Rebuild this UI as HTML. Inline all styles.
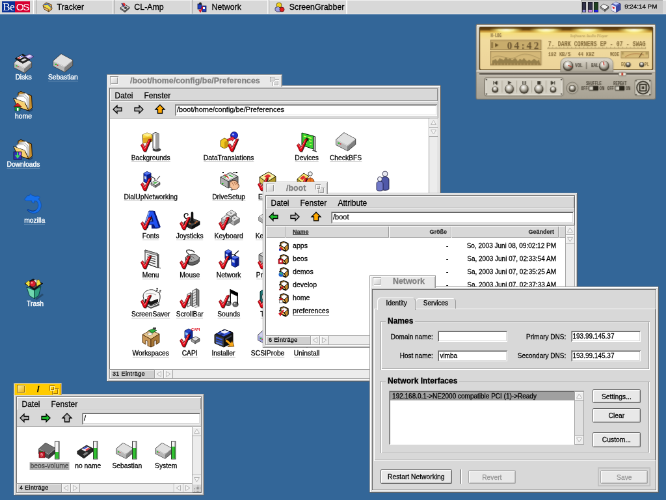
<!DOCTYPE html><html><head><meta charset="utf-8"><title>BeOS</title><style>
html,body{margin:0;padding:0;background:#336698;overflow:hidden;width:666px;height:500px}
#r{position:absolute;left:0;top:0;width:1024px;height:768px;transform-origin:0 0;transform:scale(0.650390625,0.651041667);will-change:transform;-webkit-text-stroke:.28px;font-family:"Liberation Sans",sans-serif;font-size:10px;color:#000;overflow:hidden}
#r *{box-sizing:border-box}
.a{position:absolute}
.win{position:absolute;background:#d8d8d8;box-shadow:inset -1px -1px 0 #606060,inset 1px 1px 0 #a0a0a0,inset 2px 2px 0 0 #fff,inset -2px -2px 0 0 #c0c0c0,inset 0 0 0 3px #e8e8e8,inset 4px 4px 0 #c8c8c8,inset -4px -4px 0 #fff,inset 0 0 0 5px #6c6c6c}
.win.act{box-shadow:inset -1px -1px 0 #606060,inset 1px 1px 0 #a0a0a0,inset 2px 2px 0 0 #fff,inset -2px -2px 0 0 #b8b8b8,inset 0 0 0 3px #d8d8d8,inset 4px 4px 0 #b8b8b8,inset -4px -4px 0 #fff,inset 0 0 0 5px #6c6c6c}
.tab{position:absolute;height:21px;background:#e8e8e8;box-shadow:inset 1px 1px 0 #989898,inset -1px 0 0 #989898,inset 2px 2px 0 #fff,inset -2px 0 0 #b0b0b0;font-weight:bold;font-size:12.400px;color:#808080;line-height:21px;white-space:nowrap}
.tab.act{background:#ffcb00;color:#000;box-shadow:inset 1px 1px 0 #989898,inset -1px 0 0 #989898,inset 2px 2px 0 #ffe98a,inset -2px 0 0 #d8a000}
.cb{position:absolute;left:4.500px;top:3.500px;width:13px;height:13px;background:linear-gradient(135deg,#fff,#c8c8c8);box-shadow:inset 1px 1px 0 #989898,inset -1px -1px 0 #fff,inset 2px 2px 0 #fff,inset -2px -2px 0 #989898}
.act .cb{background:linear-gradient(135deg,#fff6b0,#e8a800);box-shadow:inset 1px 1px 0 #a07000,inset -1px -1px 0 #fff2a0,inset 2px 2px 0 #fff2a0,inset -2px -2px 0 #a07000}
.zb{position:absolute;right:5px;top:4px;width:14px;height:14px}
.zb i{position:absolute;display:block;background:#d8d8d8;box-shadow:inset 1px 1px 0 #989898,inset -1px -1px 0 #fff,inset 2px 2px 0 #fff,inset -2px -2px 0 #989898}
.zb i:first-child{left:4px;top:4px;width:10px;height:10px}
.zb i:last-child{left:0;top:0;width:8px;height:8px}
.act .zb i{background:#ffcb00;box-shadow:inset 1px 1px 0 #a07000,inset -1px -1px 0 #fff2a0,inset 2px 2px 0 #fff2a0,inset -2px -2px 0 #a07000}
.mb{position:absolute;background:#d8d8d8;font-size:12px;line-height:21.500px;box-shadow:inset 1px 1px 0 #fff,inset -1px -1px 0 #989898;white-space:nowrap}
.mb span{position:absolute;top:1.200px}
.nb{position:absolute;background:#d8d8d8;box-shadow:inset 0 1px 0 #fff,inset 0 -1px 0 #989898}
.pt{position:absolute;background:#fff;box-shadow:inset 1px 1px 0 #989898,inset -1px -1px 0 #fff,inset 2px 2px 0 #606060,inset -2px -2px 0 #d8d8d8;font-size:11px;line-height:17px;padding-left:3px;white-space:nowrap;overflow:hidden}
.wh{position:absolute;background:#fff}
.lb{position:absolute;font-size:10.300px;line-height:12px;white-space:nowrap;transform:translateX(-50%);text-align:center}
.lb.u{border-bottom:1px solid #bcbcbc;line-height:11px}
.lb.w.u{border-bottom:1px solid rgba(255,255,255,.28)}
.lb.w{color:#fff;-webkit-text-stroke:.4px}
.sb{position:absolute;background:#ececec;box-shadow:inset 0 0 0 1px #a4a4a4}
.sa{position:absolute;background:#eee;box-shadow:inset 0 0 0 1px #a4a4a4,inset 2px 2px 0 #fff}
.st{position:absolute;background:#d0d0d0;font-size:9px;line-height:15.500px;letter-spacing:.35px;white-space:nowrap;box-shadow:inset 0 0 0 1px #989898,inset 2px 2px 0 #fff;padding-left:5px;overflow:hidden}
svg{position:absolute;overflow:visible}
.lg{font:17px/17px "Liberation Serif",serif;letter-spacing:-.8px;-webkit-text-stroke:0}
.lg2{font:15.500px/18.500px "Liberation Sans",sans-serif;letter-spacing:-1.600px;-webkit-text-stroke:0}
</style></head><body><div id="r">
<div class="a" style="left:0px;top:0px;width:1024px;height:21.5px;background:#d8d8d8;box-shadow:inset 0 -1px 0 #f4f4f4,inset 0 1px 0 #f0f0f0"></div>
<div class="a lg" style="left:3px;top:1.7px;width:20px;height:17.8px;background:#0c3296;color:#fff;text-align:center">Be</div>
<div class="a lg2" style="left:23px;top:1.7px;width:22.7px;height:17.8px;background:#d80032;color:#fff;text-align:center">OS</div>
<div class="a" style="left:50.5px;top:0px;width:1.5px;height:21px;background:#fff"></div>
<div class="a" style="left:54.5px;top:0px;width:1px;height:21px;background:#a0a0a0"></div>
<div class="a" style="left:87.6px;top:1px;font-size:12.4px;line-height:21px;white-space:nowrap">Tracker</div>
<div class="a" style="left:172.8px;top:0px;width:1.5px;height:21px;background:#f8f8f8"></div>
<div class="a" style="left:174.8px;top:0px;width:1px;height:21px;background:#a0a0a0"></div>
<div class="a" style="left:206.3px;top:1px;font-size:12.4px;line-height:21px;white-space:nowrap">CL-Amp</div>
<div class="a" style="left:292.9px;top:0px;width:1.5px;height:21px;background:#f8f8f8"></div>
<div class="a" style="left:294.9px;top:0px;width:1px;height:21px;background:#a0a0a0"></div>
<div class="a" style="left:325.5px;top:1px;font-size:12.4px;line-height:21px;white-space:nowrap">Network</div>
<div class="a" style="left:411.0px;top:0px;width:1.5px;height:21px;background:#f8f8f8"></div>
<div class="a" style="left:413.0px;top:0px;width:1px;height:21px;background:#a0a0a0"></div>
<div class="a" style="left:444.7px;top:1px;font-size:12.4px;line-height:21px;white-space:nowrap">ScreenGrabber</div>
<div class="a" style="left:532.0px;top:0px;width:1.5px;height:21px;background:#f8f8f8"></div>
<div class="a" style="left:892.8px;top:0px;width:126.1px;height:20.5px;background:#c8c8c8;box-shadow:inset 1px 0 0 #989898,inset 0 1px 0 #b0b0b0"></div>
<div class="a" style="left:894.8px;top:3px;width:6.5px;height:15.5px;background:linear-gradient(#303048 78%,#8888d8 78%);box-shadow:inset 0 0 0 .7px #181820"></div>
<div class="a" style="left:904.4px;top:3px;width:6.5px;height:15.5px;background:linear-gradient(#303048 78%,#c888e0 78%);box-shadow:inset 0 0 0 .7px #181820"></div>
<div class="a" style="left:913.3px;top:3px;width:6.5px;height:15.5px;background:linear-gradient(#204020 78%,#2020e8 78%);box-shadow:inset 0 0 0 .7px #181820"></div>
<div class="a" style="left:960.2px;top:0;font-size:9.8px;line-height:20.5px;white-space:nowrap">9:24:14 PM</div>
<svg style="left:20.0px;top:80.7px" width="32" height="32" viewBox="0 0 32 32"><g transform="translate(1,6) scale(0.9)"><polygon points="1,18.500 18.500,27.500 30.500,17.500 30.500,9.500 13,0 1,10.500" fill="#303030" stroke="#303030" stroke-width="1.400" stroke-linejoin="round"/><polygon points="13,0 30.500,9.500 18.500,19.500 1,10.500" fill="#e0e0e0"/><polygon points="1,10.500 18.500,19.500 18.500,27.500 1,18.500" fill="#b8b8b8"/><polygon points="18.500,19.500 30.500,9.500 30.500,17.500 18.500,27.500" fill="#808080"/><path d="M1.500 11 L18.500 20 L30 10" stroke="#f8f8f8" stroke-width=".7" fill="none"/><rect x="3.500" y="14.800" width="2.600" height="2" fill="#20c020"/><rect x="6.500" y="16.300" width="2" height="1.600" fill="#d03030"/></g><polygon points="3,9 15,2 22,6 10,13.500" fill="#181818" stroke="#000" stroke-width=".6"/><polygon points="6,8 13,4 17,6 10,10" fill="#fff"/><polygon points="7,8.500 10,6.800 12,7.800 9,9.500" fill="#e03030"/><polygon points="11,6.200 13.500,4.800 15.500,5.800 13,7.200" fill="#3040d0"/><polygon points="15,7 25,2 32,6 22,12" fill="#a088d8" stroke="#302050" stroke-width=".6"/><polygon points="20,6 26,3 29,5 23,8" fill="#e8e0ff"/><polygon points="8,12 19,6.500 26,10.500 15,16.500" fill="#282828" stroke="#000" stroke-width=".6"/><polygon points="12,11.500 18,8.500 21,10.300 15,13.500" fill="#d8d8d8"/></svg><div class="lb w" style="left:36.0px;top:113.2px">Disks</div>
<svg style="left:80.9px;top:80.7px" width="32" height="32" viewBox="0 0 32 32"><g transform="translate(0,2) scale(1)"><polygon points="1,18.500 18.500,27.500 30.500,17.500 30.500,9.500 13,0 1,10.500" fill="#303030" stroke="#303030" stroke-width="1.400" stroke-linejoin="round"/><polygon points="13,0 30.500,9.500 18.500,19.500 1,10.500" fill="#e0e0e0"/><polygon points="1,10.500 18.500,19.500 18.500,27.500 1,18.500" fill="#b8b8b8"/><polygon points="18.500,19.500 30.500,9.500 30.500,17.500 18.500,27.500" fill="#808080"/><path d="M1.500 11 L18.500 20 L30 10" stroke="#f8f8f8" stroke-width=".7" fill="none"/><rect x="3.500" y="14.800" width="2.600" height="2" fill="#20c020"/><rect x="6.500" y="16.300" width="2" height="1.600" fill="#d03030"/></g></svg><div class="lb w u" style="left:96.9px;top:113.2px">Sebastian</div>
<svg style="left:20.0px;top:140.1px" width="32" height="32" viewBox="0 0 32 32"><polygon points="24,31 30.500,27 30.500,29 25,32.500" fill="#102040" opacity=".5"/><polygon points="8,2.500 12,.5 16,2 28.500,7 29.500,26 24,30 7,24" fill="#c89030" stroke="#201000" stroke-width="1"/><polygon points="9,5 20,3 25,8 25,26 12,22" fill="#fff" stroke="#707070" stroke-width=".6"/><polygon points="7,7 18,5.500 23,10 23.500,27 10,23" fill="#f4f4f4" stroke="#707070" stroke-width=".6"/><polygon points="5,9 16,8 21,12.500 22.500,28 8,24" fill="#fff" stroke="#707070" stroke-width=".6"/><polygon points=".7,11 18,17 24,30 7,24.500" fill="#f8d070" stroke="#201000" stroke-width="1"/><path d="M2 12 L18 17.700" stroke="#fff0b0" stroke-width=".8"/><polygon points="1,24 7,18 13,24" fill="#d02020" stroke="#400" stroke-width=".6"/><rect x="3" y="24" width="8" height="6" fill="#20a040" stroke="#032" stroke-width=".6"/><rect x="6" y="26" width="2.5" height="4" fill="#fff"/></svg><div class="lb w" style="left:36.0px;top:173.1px">home</div>
<svg style="left:20.0px;top:213.9px" width="32" height="32" viewBox="0 0 32 32"><polygon points="24,31 30.500,27 30.500,29 25,32.500" fill="#102040" opacity=".5"/><polygon points="8,2.500 12,.5 16,2 28.500,7 29.500,26 24,30 7,24" fill="#c89030" stroke="#201000" stroke-width="1"/><polygon points="9,5 20,3 25,8 25,26 12,22" fill="#fff" stroke="#707070" stroke-width=".6"/><polygon points="7,7 18,5.500 23,10 23.500,27 10,23" fill="#f4f4f4" stroke="#707070" stroke-width=".6"/><polygon points="5,9 16,8 21,12.500 22.500,28 8,24" fill="#fff" stroke="#707070" stroke-width=".6"/><polygon points=".7,11 18,17 24,30 7,24.500" fill="#f8d070" stroke="#201000" stroke-width="1"/><path d="M2 12 L18 17.700" stroke="#fff0b0" stroke-width=".8"/><rect x="1" y="19" width="12" height="12" fill="#3030b0" stroke="#001" stroke-width=".6"/><path d="M7 20v6M4 24l3 4 3-4" stroke="#40e060" stroke-width="2" fill="none"/><rect x="9" y="20" width="3" height="4" fill="#c060e0"/></svg><div class="lb w u" style="left:36.0px;top:246.9px">Downloads</div>
<svg style="left:37.2px;top:297.1px" width="32" height="32" viewBox="0 0 32 32"><path d="M.6 9.200 L5 3.700 L8 3.500 L9.800 .6 L12 3 L17 4.500 L22 4 L24.500 6.200 L22 8.500 L24 11 C27 15 27.500 22 23 27 C20 30.500 14 31.500 9 29 L5 25.800 L6 24.300 C10 27.500 15 28.500 19 25 C22.500 22 23 16 19.500 12 L16 11.500 L15.500 14.800 L12.500 14.500 L11.500 11.300 L7 11.500 L3 11.500 Z" fill="#1870e8" stroke="#0848a8" stroke-width=".7"/><path d="M9 29 L5 25.800 L6 24.300 C10 27.500 15 28.500 19 25" fill="none" stroke="#083888" stroke-width="1"/></svg><div class="lb w u" style="left:53.2px;top:332.6px">mozilla</div>
<svg style="left:38.1px;top:427.9px" width="32" height="32" viewBox="0 0 32 32"><polygon points="16,31 27,23 29,25 18,33" fill="#203850" opacity=".6"/><polygon points="3,13 14.800,17.800 14.800,30.700 7.400,26.400" fill="#70d8b0" stroke="#003028" stroke-width=".8"/><polygon points="14.800,17.800 25,11.700 21.500,25.800 14.800,30.700" fill="#30a080" stroke="#003028" stroke-width=".8"/><polygon points="0,7.400 13,.6 27.700,7.400 14.800,17.200" fill="#181818" stroke="#000" stroke-width=".8"/><polygon points="1.500,7.400 13,2.500 25,7.400 14.800,14.500" fill="#505050"/><polygon points="1,7 6,3 10,8 6,12" fill="#f0e040" stroke="#605000" stroke-width=".6"/><polygon points="17,3 22,1.500 25,8 19,11.500" fill="#f0e040" stroke="#605000" stroke-width=".6"/><polygon points="14,2 18,1 19,6 15,7" fill="#d8d8d8" stroke="#404040" stroke-width=".5"/><circle cx="12.300" cy="7.800" r="4.600" fill="#d82030" stroke="#500" stroke-width=".7"/><circle cx="11" cy="6.300" r="1.500" fill="#ff9090"/></svg><div class="lb w" style="left:54.1px;top:461.4px">Trash</div>
<svg style="left:65.0px;top:3px" width="16" height="16" viewBox="0 0 16 16"><polygon points="1,5 6,1 14,4 15,11 10,15 3,11" fill="#e0a850" stroke="#301800" stroke-width=".8"/><polygon points="2,4 8,2 14,8 12,10" fill="#3060c0"/><polygon points="2,6 8,4 13,9 11,11" fill="#f0e040"/><polygon points="1,7 9,11 10,15 3,11" fill="#f0c070" stroke="#301800" stroke-width=".6"/></svg>
<svg style="left:183.7px;top:3px" width="16" height="16" viewBox="0 0 16 16"><polygon points="1,9 8,4 15,8 8,14" fill="#d0d0d0" stroke="#202020" stroke-width=".8"/><polygon points="1,9 8,14 8,16 1,11" fill="#808080" stroke="#202020" stroke-width=".5"/><polygon points="8,14 15,8 15,10 8,16" fill="#606060" stroke="#202020" stroke-width=".5"/><circle cx="6" cy="4" r="2.500" fill="#e03030"/><path d="M3 2l4 6" stroke="#204080" stroke-width="1.500"/><circle cx="9" cy="9" r="2" fill="#404040"/></svg>
<svg style="left:302.9px;top:3px" width="16" height="16" viewBox="0 0 16 16"><rect x="1" y="3" width="6" height="8" fill="#2040c0" stroke="#000830" stroke-width=".7"/><rect x="8" y="6" width="6" height="9" fill="#2040c0" stroke="#000830" stroke-width=".7"/><circle cx="5" cy="2.500" r="2" fill="#202020"/><path d="M3 12l2 3 4-8" stroke="#e01020" stroke-width="1.800" fill="none"/><rect x="9" y="8" width="3" height="3" fill="#fff"/></svg>
<svg style="left:421.7px;top:3px" width="16" height="16" viewBox="0 0 16 16"><circle cx="7" cy="5" r="4" fill="#f0d020" stroke="#403000" stroke-width=".7"/><polygon points="1,9 6,7 9,10 9,15 4,15 1,13" fill="#a0a0e0" stroke="#202040" stroke-width=".7"/><circle cx="11.500" cy="11.500" r="3.500" fill="#e02020" stroke="#400" stroke-width=".7"/></svg>
<svg style="left:922.5px;top:5px" width="14" height="13" viewBox="0 0 14 13"><polygon points="5,1 13,5 7,10 0,5" fill="#f0f0f0" stroke="#303030" stroke-width=".8"/><polygon points="0,5 7,10 7,12.500 0,7.500" fill="#a0a0a0" stroke="#303030" stroke-width=".6"/><polygon points="7,10 13,5 13,7.500 7,12.500" fill="#707070" stroke="#303030" stroke-width=".6"/></svg>
<svg style="left:939.4px;top:2px" width="16" height="18" viewBox="0 0 16 18"><polygon points="1,5 8,1 15,4 15,13 8,17 1,14" fill="#5868c0" stroke="#101040" stroke-width=".8"/><polygon points="1,5 8,8 8,17 1,14" fill="#e8e8f8"/><polygon points="8,8 15,4 15,13 8,17" fill="#3848a0"/><polygon points="2,8 7,10 4,12" fill="#e02020"/><polygon points="3,3 8,1 13,3 8,5.500" fill="#c8d0f8"/></svg>
<div class="win" style="left:164px;top:131px;width:514px;height:455px"><div class="mb" style="left:5px;top:5px;width:504px;height:19px"><span style="left:7.5px">Datei</span><span style="left:52.5px">Fenster</span></div><div class="nb" style="left:5px;top:24px;width:504px;height:26.5px"><svg style="left:3.5px;top:6px" width="16" height="14" viewBox="0 0 16 14"><path d="M1 7 L7 1 L7 4.500 L14 4.500 L14 9.500 L7 9.500 L7 13 Z" fill="#b4b4b4" stroke="#000" stroke-width="1.300"/></svg><svg style="left:36px;top:6px" width="16" height="14" viewBox="0 0 16 14"><path d="M15 7 L9 1 L9 4.500 L2 4.500 L2 9.500 L9 9.500 L9 13 Z" fill="#b4b4b4" stroke="#000" stroke-width="1.300"/></svg><svg style="left:68.5px;top:5px" width="16" height="15" viewBox="0 0 16 15"><path d="M8 1 L15 8 L11.500 8 L11.500 14 L4.500 14 L4.500 8 L1 8 Z" fill="#ffa800" stroke="#000" stroke-width="1.300"/></svg><div class="pt" style="left:100px;top:4.500px;width:403px;height:18px">/boot/home/config/be/Preferences</div></div><div class="wh" style="left:5px;top:50.5px;width:491px;height:386.5px;overflow:hidden"><svg style="left:46.7px;top:20.9px" width="32" height="32" viewBox="0 0 32 32"><ellipse cx="25" cy="28" rx="6.500" ry="2.800" fill="#404040"/><polygon points="19,3 23,1.500 28,3 28,26 23,28 19,26" fill="#e8e8e8" stroke="#202020" stroke-width=".9"/><polygon points="23,4 28,3 28,26 23,28" fill="#a0a0a0"/><rect x="20.500" y="6" width="2" height="17" fill="#fff"/><polygon points="3,5 10,2 18,5 18,15 4,18" fill="#f8d840" stroke="#503800" stroke-width=".9"/><polygon points="4,10 18,8 18,15 4,18" fill="#e0a820"/><polygon points="3,5 10,2 18,5 11,7.500" fill="#fff090"/><g transform="translate(0,0)"><path d="M2 22 L5 19.500 L7.500 25 L13.500 13 L17.500 12 L9 31.500 L6 31.500 Z" fill="#000" opacity=".8"/><path d="M.5 21 L3.500 18.300 L6.500 24.500 L12.500 12.300 L16.500 11 L8 30.500 L5 30.500 Z" fill="#e00818" stroke="#600" stroke-width=".7"/><path d="M2 21 L3.300 20 L6.500 26.500 L13 13.500" fill="none" stroke="#ff9090" stroke-width=".9"/></g></svg><div class="lb u" style="left:62.69999999999999px;top:55.4px">Backgrounds</div><svg style="left:166.6px;top:20.9px" width="32" height="32" viewBox="0 0 32 32"><circle cx="24" cy="6" r="5.5" fill="#2030d0" stroke="#000850" stroke-width=".8"/><circle cx="22.5" cy="4.5" r="1.6" fill="#a0b0ff"/><polygon points="3,14 9,10 15,13 15,23 9,26 3,23" fill="#f0c820" stroke="#504000" stroke-width=".8"/><polygon points="9,16 15,13 15,23 9,26" fill="#c89810"/><path d="M13 12 L20 9 L19 7 L25 10 L21 15 L20.5 12.5 L14 15 Z" fill="#f03040" stroke="#600" stroke-width=".6"/><g transform="translate(14,0)"><path d="M2 22 L5 19.500 L7.500 25 L13.500 13 L17.500 12 L9 31.500 L6 31.500 Z" fill="#000" opacity=".8"/><path d="M.5 21 L3.500 18.300 L6.500 24.500 L12.500 12.300 L16.500 11 L8 30.500 L5 30.500 Z" fill="#e00818" stroke="#600" stroke-width=".7"/><path d="M2 21 L3.300 20 L6.500 26.500 L13 13.500" fill="none" stroke="#ff9090" stroke-width=".9"/></g></svg><div class="lb u" style="left:182.60000000000002px;top:55.4px">DataTranslations</div><svg style="left:286.6px;top:20.9px" width="32" height="32" viewBox="0 0 32 32"><polygon points="8,2 26,7 26,27 8,21" fill="#38d030" stroke="#002800" stroke-width="1"/><path d="M11 7l4 1.200M18 9l5 1.500M12 12l3 .9M19 14l4 1.200M11 16.500l5 1.500M20 19.500l3 .9" stroke="#e8ff60" stroke-width="1.500"/><rect x="14" y="9.500" width="4.500" height="4" fill="#103810" transform="skewY(15) translate(0,-4)"/><polygon points="26,7 29,8 29,30 26,29" fill="#b0b0b0" stroke="#202020" stroke-width=".8"/><path d="M24 29 L31 31" stroke="#202020" stroke-width="1"/><g transform="translate(0,0)"><path d="M2 22 L5 19.500 L7.500 25 L13.500 13 L17.500 12 L9 31.500 L6 31.500 Z" fill="#000" opacity=".8"/><path d="M.5 21 L3.500 18.300 L6.500 24.500 L12.500 12.300 L16.500 11 L8 30.500 L5 30.500 Z" fill="#e00818" stroke="#600" stroke-width=".7"/><path d="M2 21 L3.300 20 L6.500 26.500 L13 13.500" fill="none" stroke="#ff9090" stroke-width=".9"/></g></svg><div class="lb u" style="left:302.6px;top:55.4px">Devices</div><svg style="left:346.5px;top:20.9px" width="32" height="32" viewBox="0 0 32 32"><g transform="translate(0,2) scale(1)"><polygon points="1,18.500 18.500,27.500 30.500,17.500 30.500,9.500 13,0 1,10.500" fill="#303030" stroke="#303030" stroke-width="1.400" stroke-linejoin="round"/><polygon points="13,0 30.500,9.500 18.500,19.500 1,10.500" fill="#e0e0e0"/><polygon points="1,10.500 18.500,19.500 18.500,27.500 1,18.500" fill="#b8b8b8"/><polygon points="18.500,19.500 30.500,9.500 30.500,17.500 18.500,27.500" fill="#808080"/><path d="M1.500 11 L18.500 20 L30 10" stroke="#f8f8f8" stroke-width=".7" fill="none"/><rect x="3.500" y="14.800" width="2.600" height="2" fill="#20c020"/><rect x="6.500" y="16.300" width="2" height="1.600" fill="#d03030"/></g></svg><div class="lb u" style="left:362.5px;top:55.4px">CheckBFS</div><svg style="left:46.7px;top:80.9px" width="32" height="32" viewBox="0 0 32 32"><polygon points="5,4 10,1.500 16,4 16,17 10,19.500 5,17" fill="#1838c8" stroke="#000830" stroke-width=".9"/><polygon points="10,6.500 16,4 16,17 10,19.500" fill="#0c1c80"/><polygon points="5,4 10,1.500 16,4 10,6.500" fill="#5878f0"/><polygon points="6,8 9,9.500 9,14 6,12.500" fill="#c8d0e8"/><path d="M16 9 L22 12 L22 15" stroke="#101010" stroke-width="1" fill="none"/><path d="M25 14 L30 8" stroke="#101010" stroke-width="1"/><polygon points="16,19 23,15 30,18.500 23,23" fill="#f4f4f4" stroke="#303030" stroke-width=".8"/><polygon points="16,19 23,23 23,26 16,22" fill="#a8a8a8" stroke="#303030" stroke-width=".6"/><polygon points="23,23 30,18.500 30,21.500 23,26" fill="#787878" stroke="#303030" stroke-width=".6"/><polygon points="19,19 23,17 26,18.500 22,20.500" fill="#50b050"/><g transform="translate(0,0)"><path d="M2 22 L5 19.500 L7.500 25 L13.500 13 L17.500 12 L9 31.500 L6 31.500 Z" fill="#000" opacity=".8"/><path d="M.5 21 L3.500 18.300 L6.500 24.500 L12.500 12.300 L16.500 11 L8 30.500 L5 30.500 Z" fill="#e00818" stroke="#600" stroke-width=".7"/><path d="M2 21 L3.300 20 L6.500 26.500 L13 13.500" fill="none" stroke="#ff9090" stroke-width=".9"/></g></svg><div class="lb u" style="left:62.69999999999999px;top:115.4px">DialUpNetworking</div><svg style="left:166.6px;top:80.9px" width="32" height="32" viewBox="0 0 32 32"><polygon points="18,29 31,22 32,24 20,31" fill="#000" opacity=".55"/><polygon points="3,10 18,3 30,9 15,17" fill="#d8d8d8" stroke="#303030" stroke-width=".9"/><polygon points="3,10 15,17 15,27 3,20" fill="#b0b0b0" stroke="#303030" stroke-width=".9"/><polygon points="15,17 30,9 30,19 15,27" fill="#808080" stroke="#303030" stroke-width=".9"/><polygon points="7,10 18,5 26,9 15,14.500" fill="#f4f4f4" stroke="#909090" stroke-width=".5"/><polygon points="8,10 13,7.700 15,8.700 10,11" fill="#30b030"/><polygon points="17,6.500 23,9 21,10 15.500,7.300" fill="#30b030"/><path d="M9 6 L16 12" stroke="#e02020" stroke-width="1.200"/><rect x="5" y="19" width="2.500" height="2" fill="#20c020"/><path d="M17 19 C19 15 25 14 28.500 17 L31.500 23 C31.500 27 27 30 22 29 L17.500 24.500 Z" fill="#f4c098" stroke="#401808" stroke-width=".9"/><path d="M20.500 18l3 5M23.500 17l3 5M26.500 17.500l2.500 5" stroke="#905030" stroke-width=".7"/><rect x="6" y="2" width="2" height="2" fill="#000"/><rect x="27" y="2" width="2" height="2" fill="#000"/><path d="M22 3 L27 3" stroke="#000" stroke-width="1"/></svg><div class="lb u" style="left:182.60000000000002px;top:115.4px">DriveSetup</div><svg style="left:226.6px;top:80.9px" width="32" height="32" viewBox="0 0 32 32"><polygon points="3,10 17,2 28,9 14,18" fill="#f8f0a0" stroke="#201800" stroke-width="1"/><polygon points="3,10 14,18 14,26 3,18" fill="#d8c050" stroke="#201800" stroke-width=".8"/><polygon points="14,18 28,9 28,17 14,26" fill="#b09828" stroke="#201800" stroke-width=".8"/><polygon points="10,9 16,5.500 21,8.500 15,12" fill="#e03030"/><g transform="translate(0,0)"><path d="M2 22 L5 19.500 L7.500 25 L13.500 13 L17.500 12 L9 31.500 L6 31.500 Z" fill="#000" opacity=".8"/><path d="M.5 21 L3.500 18.300 L6.500 24.500 L12.500 12.300 L16.500 11 L8 30.500 L5 30.500 Z" fill="#e00818" stroke="#600" stroke-width=".7"/><path d="M2 21 L3.300 20 L6.500 26.500 L13 13.500" fill="none" stroke="#ff9090" stroke-width=".9"/></g></svg><div class="lb u" style="left:242.60000000000002px;top:115.4px">E-mail</div><svg style="left:286.6px;top:80.9px" width="32" height="32" viewBox="0 0 32 32"><polygon points="1,13 11,4 19,9 9,19" fill="#f8e870" stroke="#201800" stroke-width=".9"/><polygon points="5,12 10,7.500 14,10 9,14.500" fill="#e03030"/><polygon points="1,13 9,19 9,23 1,17" fill="#c8a830" stroke="#201800" stroke-width=".7"/><circle cx="21" cy="5" r="3.200" fill="#f4f4f4" stroke="#202020" stroke-width=".8"/><path d="M15 18 C15 9 27 9 27 18 L27 26 L15 26 Z" fill="#f07820" stroke="#401000" stroke-width=".8"/><path d="M21 10 L21 26" stroke="#c05010" stroke-width="1"/><g transform="translate(0,0)"><path d="M2 22 L5 19.500 L7.500 25 L13.500 13 L17.500 12 L9 31.500 L6 31.500 Z" fill="#000" opacity=".8"/><path d="M.5 21 L3.500 18.300 L6.500 24.500 L12.500 12.300 L16.500 11 L8 30.500 L5 30.500 Z" fill="#e00818" stroke="#600" stroke-width=".7"/><path d="M2 21 L3.300 20 L6.500 26.500 L13 13.500" fill="none" stroke="#ff9090" stroke-width=".9"/></g></svg><div class="lb u" style="left:302.6px;top:115.4px">FileTypes</div><svg style="left:405.0px;top:80.9px" width="32" height="32" viewBox="0 0 32 32"><path d="M12 14 C12 8 24 8 24 14 L24 28 C24 31 12 31 12 28 Z" fill="#5058a8" stroke="#101030" stroke-width=".8"/><circle cx="18" cy="5" r="4" fill="#e8e8f0" stroke="#202040" stroke-width=".8"/><path d="M5 20 C5 15 15 15 15 20 L15 29 C15 32 5 32 5 29 Z" fill="#7078c8" stroke="#101030" stroke-width=".8"/><circle cx="10" cy="13" r="3.500" fill="#f0f0f8" stroke="#202040" stroke-width=".8"/></svg><div class="lb u" style="left:421.0px;top:115.4px">FontPanel</div><svg style="left:46.7px;top:140.8px" width="32" height="32" viewBox="0 0 32 32"><path d="M16 2 L22 2 L31 27 L25 29 L17 29 Z" fill="#0a1a80"/><path d="M13 2 L20 2 L29 28 L22 28 L20.500 23 L12.500 23 L11 28 L4.500 28 Z M14.500 18 L19.500 18 L17 9 Z" fill="#2050f0" stroke="#000c50" stroke-width=".8" fill-rule="evenodd"/><path d="M13.500 3 L6 27" stroke="#90b0ff" stroke-width="1.400"/><g transform="translate(0,0)"><path d="M2 22 L5 19.500 L7.500 25 L13.500 13 L17.500 12 L9 31.500 L6 31.500 Z" fill="#000" opacity=".8"/><path d="M.5 21 L3.500 18.300 L6.500 24.500 L12.500 12.300 L16.500 11 L8 30.500 L5 30.500 Z" fill="#e00818" stroke="#600" stroke-width=".7"/><path d="M2 21 L3.300 20 L6.500 26.500 L13 13.500" fill="none" stroke="#ff9090" stroke-width=".9"/></g></svg><div class="lb u" style="left:62.69999999999999px;top:175.3px">Fonts</div><svg style="left:106.7px;top:140.8px" width="32" height="32" viewBox="0 0 32 32"><polygon points="7,19 19,13 31,18 31,23 19,30 7,24" fill="#101010" stroke="#000" stroke-width=".8"/><polygon points="7,19 19,13 31,18 19,25" fill="#484848"/><polygon points="7,19 19,25 19,30 7,24" fill="#282828"/><circle cx="13" cy="19.500" r="1.100" fill="#f07020"/><circle cx="16" cy="21.500" r="1.100" fill="#f07020"/><circle cx="24" cy="20.500" r="1.100" fill="#f07020"/><circle cx="26.500" cy="18.500" r="1.100" fill="#f07020"/><path d="M19.500 19 L19.500 5" stroke="#101010" stroke-width="3.600" stroke-linecap="round"/><ellipse cx="19.500" cy="19" rx="4" ry="2.200" fill="#181818"/><path d="M11 14 C6 12 6 7 10 6 C13 5.500 14 8 12 9" stroke="#000" stroke-width="1.300" fill="none"/><g transform="translate(0,0)"><path d="M2 22 L5 19.500 L7.500 25 L13.500 13 L17.500 12 L9 31.500 L6 31.500 Z" fill="#000" opacity=".8"/><path d="M.5 21 L3.500 18.300 L6.500 24.500 L12.500 12.300 L16.500 11 L8 30.500 L5 30.500 Z" fill="#e00818" stroke="#600" stroke-width=".7"/><path d="M2 21 L3.300 20 L6.500 26.500 L13 13.500" fill="none" stroke="#ff9090" stroke-width=".9"/></g></svg><div class="lb u" style="left:122.69999999999999px;top:175.3px">Joysticks</div><svg style="left:166.6px;top:140.8px" width="32" height="32" viewBox="0 0 32 32"><g transform="translate(12,1)"><polygon points="0,5 8,0 15,4 15,10 7,15 0,11" fill="#202020" stroke="#202020" stroke-width="1" stroke-linejoin="round"/><polygon points="0,5 8,0 15,4 7,9" fill="#e4e4e4"/><polygon points="0,5 7,9 7,15 0,11" fill="#b0b0b0"/><polygon points="7,9 15,4 15,10 7,15" fill="#808080"/><path d="M5.500 5.500l3-1.800M6 3.500l3 1.800" stroke="#606060" stroke-width=".8"/></g><g transform="translate(17,9)"><polygon points="0,5 8,0 15,4 15,10 7,15 0,11" fill="#202020" stroke="#202020" stroke-width="1" stroke-linejoin="round"/><polygon points="0,5 8,0 15,4 7,9" fill="#e4e4e4"/><polygon points="0,5 7,9 7,15 0,11" fill="#b0b0b0"/><polygon points="7,9 15,4 15,10 7,15" fill="#808080"/><path d="M5.500 5.500l3-1.800M6 3.500l3 1.800" stroke="#606060" stroke-width=".8"/></g><g transform="translate(5,8)"><polygon points="0,5 8,0 15,4 15,10 7,15 0,11" fill="#202020" stroke="#202020" stroke-width="1" stroke-linejoin="round"/><polygon points="0,5 8,0 15,4 7,9" fill="#e4e4e4"/><polygon points="0,5 7,9 7,15 0,11" fill="#b0b0b0"/><polygon points="7,9 15,4 15,10 7,15" fill="#808080"/><path d="M5.500 5.500l3-1.800M6 3.500l3 1.800" stroke="#606060" stroke-width=".8"/></g><g transform="translate(0,0)"><path d="M2 22 L5 19.500 L7.500 25 L13.500 13 L17.500 12 L9 31.500 L6 31.500 Z" fill="#000" opacity=".8"/><path d="M.5 21 L3.500 18.300 L6.500 24.500 L12.500 12.300 L16.500 11 L8 30.500 L5 30.500 Z" fill="#e00818" stroke="#600" stroke-width=".7"/><path d="M2 21 L3.300 20 L6.500 26.500 L13 13.500" fill="none" stroke="#ff9090" stroke-width=".9"/></g></svg><div class="lb u" style="left:182.60000000000002px;top:175.3px">Keyboard</div><svg style="left:226.6px;top:140.8px" width="32" height="32" viewBox="0 0 32 32"><g transform="translate(2,6)"><polygon points="0,5 8,0 15,4 15,10 7,15 0,11" fill="#202020" stroke="#202020" stroke-width="1" stroke-linejoin="round"/><polygon points="0,5 8,0 15,4 7,9" fill="#e4e4e4"/><polygon points="0,5 7,9 7,15 0,11" fill="#b0b0b0"/><polygon points="7,9 15,4 15,10 7,15" fill="#808080"/><path d="M5.500 5.500l3-1.800M6 3.500l3 1.800" stroke="#606060" stroke-width=".8"/></g><g transform="translate(14,2)"><polygon points="0,5 8,0 15,4 15,10 7,15 0,11" fill="#202020" stroke="#202020" stroke-width="1" stroke-linejoin="round"/><polygon points="0,5 8,0 15,4 7,9" fill="#e4e4e4"/><polygon points="0,5 7,9 7,15 0,11" fill="#b0b0b0"/><polygon points="7,9 15,4 15,10 7,15" fill="#808080"/><path d="M5.500 5.500l3-1.800M6 3.500l3 1.800" stroke="#606060" stroke-width=".8"/></g><g transform="translate(12,13)"><polygon points="0,5 8,0 15,4 15,10 7,15 0,11" fill="#202020" stroke="#202020" stroke-width="1" stroke-linejoin="round"/><polygon points="0,5 8,0 15,4 7,9" fill="#e4e4e4"/><polygon points="0,5 7,9 7,15 0,11" fill="#b0b0b0"/><polygon points="7,9 15,4 15,10 7,15" fill="#808080"/><path d="M5.500 5.500l3-1.800M6 3.500l3 1.800" stroke="#606060" stroke-width=".8"/></g></svg><div class="lb u" style="left:242.60000000000002px;top:175.3px">Keymap</div><svg style="left:46.7px;top:200.8px" width="32" height="32" viewBox="0 0 32 32"><polygon points="7,2 26,7.500 26,29 7,22" fill="#f4f4f4" stroke="#202020" stroke-width="1"/><polygon points="7,2 26,7.500 26,10.500 7,5" fill="#b0b0b0" stroke="#202020" stroke-width=".6"/><path d="M10 9l13 3.800M10 12.500l13 3.800M10 16l13 3.800M10 19.500l13 3.800" stroke="#404040" stroke-width="1.300"/><polygon points="26,7.500 28.500,8.500 28.500,30 26,29" fill="#505050"/><path d="M7 22 L26 29 L31 30" stroke="#202020" stroke-width=".8" fill="none"/><g transform="translate(0,0)"><path d="M2 22 L5 19.500 L7.500 25 L13.500 13 L17.500 12 L9 31.500 L6 31.500 Z" fill="#000" opacity=".8"/><path d="M.5 21 L3.500 18.300 L6.500 24.500 L12.500 12.300 L16.500 11 L8 30.500 L5 30.500 Z" fill="#e00818" stroke="#600" stroke-width=".7"/><path d="M2 21 L3.300 20 L6.500 26.500 L13 13.500" fill="none" stroke="#ff9090" stroke-width=".9"/></g></svg><div class="lb u" style="left:62.69999999999999px;top:235.3px">Menu</div><svg style="left:106.7px;top:200.8px" width="32" height="32" viewBox="0 0 32 32"><path d="M9 14 C12 9 20 7 25 9 L31 14 L31 19 C28 25 20 27 14 25 L9 20 Z" fill="#282828"/><path d="M9 14 C12 9 20 7 25 9 L31 14 C28 19 20 22 14 20 Z" fill="#a8a8a8" stroke="#202020" stroke-width=".8"/><path d="M14 20 C20 22 28 19 31 14 L31 18 C28 24 20 26 14 24 Z" fill="#606060"/><path d="M12 11 L19 17 M16 9.500 L23 15" stroke="#404040" stroke-width=".8"/><path d="M15 9 C8 4 10 1 16 2 C20 2.500 22 4 23 6" stroke="#303030" stroke-width="1.300" fill="none"/><g transform="translate(0,0)"><path d="M2 22 L5 19.500 L7.500 25 L13.500 13 L17.500 12 L9 31.500 L6 31.500 Z" fill="#000" opacity=".8"/><path d="M.5 21 L3.500 18.300 L6.500 24.500 L12.500 12.300 L16.500 11 L8 30.500 L5 30.500 Z" fill="#e00818" stroke="#600" stroke-width=".7"/><path d="M2 21 L3.300 20 L6.500 26.500 L13 13.500" fill="none" stroke="#ff9090" stroke-width=".9"/></g></svg><div class="lb u" style="left:122.69999999999999px;top:235.3px">Mouse</div><svg style="left:166.6px;top:200.8px" width="32" height="32" viewBox="0 0 32 32"><polygon points="10,4 15,1.500 20,4 20,15 15,17.500 10,15" fill="#1838c8" stroke="#000830" stroke-width=".9"/><polygon points="15,6.500 20,4 20,15 15,17.500" fill="#0c1c80"/><polygon points="10,4 15,1.500 20,4 15,6.500" fill="#5878f0"/><polygon points="11,7.500 14,9 14,12 11,10.500" fill="#d0d8f0"/><polygon points="20,13 25.500,10.500 31,13 31,25.500 25.500,28.500 20,25.500" fill="#1838c8" stroke="#000830" stroke-width=".9"/><polygon points="25.500,15.500 31,13 31,25.500 25.500,28.500" fill="#0c1c80"/><polygon points="20,13 25.500,10.500 31,13 25.500,15.500" fill="#5878f0"/><polygon points="21,16.500 24.500,18 24.500,22 21,20.500" fill="#d0d8f0"/><path d="M20 8 L27 11 M24 9.500 L31 3" stroke="#101010" stroke-width="1.200" fill="none"/><g transform="translate(0,0)"><path d="M2 22 L5 19.500 L7.500 25 L13.500 13 L17.500 12 L9 31.500 L6 31.500 Z" fill="#000" opacity=".8"/><path d="M.5 21 L3.500 18.300 L6.500 24.500 L12.500 12.300 L16.500 11 L8 30.500 L5 30.500 Z" fill="#e00818" stroke="#600" stroke-width=".7"/><path d="M2 21 L3.300 20 L6.500 26.500 L13 13.500" fill="none" stroke="#ff9090" stroke-width=".9"/></g></svg><div class="lb u" style="left:182.60000000000002px;top:235.3px">Network</div><svg style="left:226.6px;top:200.8px" width="32" height="32" viewBox="0 0 32 32"><polygon points="2,9 14,3 28,9 16,16" fill="#e0e0e0" stroke="#303030" stroke-width=".9"/><polygon points="2,9 16,16 16,25 2,18" fill="#a8a8a8" stroke="#303030" stroke-width=".7"/><polygon points="16,16 28,9 28,18 16,25" fill="#787878" stroke="#303030" stroke-width=".7"/><polygon points="8,6 16,1.500 22,4.500 14,9" fill="#fff" stroke="#606060" stroke-width=".6"/><g transform="translate(0,0)"><path d="M2 22 L5 19.500 L7.500 25 L13.500 13 L17.500 12 L9 31.500 L6 31.500 Z" fill="#000" opacity=".8"/><path d="M.5 21 L3.500 18.300 L6.500 24.500 L12.500 12.300 L16.500 11 L8 30.500 L5 30.500 Z" fill="#e00818" stroke="#600" stroke-width=".7"/><path d="M2 21 L3.300 20 L6.500 26.500 L13 13.500" fill="none" stroke="#ff9090" stroke-width=".9"/></g></svg><div class="lb u" style="left:242.60000000000002px;top:235.3px">Printers</div><svg style="left:46.7px;top:260.7px" width="32" height="32" viewBox="0 0 32 32"><path d="M5 24 L16 30 L29 24 L29 27 L16 32 L5 27 Z" fill="#505050"/><path d="M4 13 C4 6 12 2 19 3 L29 8 C31 13 30 19 28 23 L16 28 L6 22 Z" fill="#fafafa" stroke="#202020" stroke-width="1"/><path d="M7 17 L16 21 L27 17 L27 22 L16 27 L7 22 Z" fill="#181818"/><path d="M8 10 C12 8 18 8 24 11" stroke="#b0b0b0" stroke-width="1.200" fill="none"/><path d="M9 13 L15 15.500" stroke="#c0c0c0" stroke-width="1"/><path d="M24 1h3l-3 3h3M29 4h2.500l-2.500 2.500h2.500" stroke="#000" stroke-width=".9" fill="none"/><g transform="translate(0,0)"><path d="M2 22 L5 19.500 L7.500 25 L13.500 13 L17.500 12 L9 31.500 L6 31.500 Z" fill="#000" opacity=".8"/><path d="M.5 21 L3.500 18.300 L6.500 24.500 L12.500 12.300 L16.500 11 L8 30.500 L5 30.500 Z" fill="#e00818" stroke="#600" stroke-width=".7"/><path d="M2 21 L3.300 20 L6.500 26.500 L13 13.500" fill="none" stroke="#ff9090" stroke-width=".9"/></g></svg><div class="lb u" style="left:62.69999999999999px;top:295.2px">ScreenSaver</div><svg style="left:106.7px;top:260.7px" width="32" height="32" viewBox="0 0 32 32"><polygon points="12,10 17,7.500 17,27 12,29.500" fill="#e8e8e8" stroke="#303030" stroke-width=".8"/><polygon points="17,7.500 20,9 20,28.500 17,27" fill="#888" stroke="#303030" stroke-width=".6"/><path d="M12 14l5-2.500M12 25l5-2.500" stroke="#505050" stroke-width=".8"/><polygon points="20,4.500 26,1.500 26,26 20,29" fill="#e0e0e0" stroke="#303030" stroke-width=".9"/><polygon points="26,1.500 30,3.500 30,28 26,26" fill="#808080" stroke="#303030" stroke-width=".7"/><path d="M20 9l6-3M20 13l6-3M20 17l6-3M20 21l6-3M20 25l6-3" stroke="#505050" stroke-width=".8"/><polygon points="22,29.500 30,28 31,29 24,31" fill="#000" opacity=".4"/><g transform="translate(0,0)"><path d="M2 22 L5 19.500 L7.500 25 L13.500 13 L17.500 12 L9 31.500 L6 31.500 Z" fill="#000" opacity=".8"/><path d="M.5 21 L3.500 18.300 L6.500 24.500 L12.500 12.300 L16.500 11 L8 30.500 L5 30.500 Z" fill="#e00818" stroke="#600" stroke-width=".7"/><path d="M2 21 L3.300 20 L6.500 26.500 L13 13.500" fill="none" stroke="#ff9090" stroke-width=".9"/></g></svg><div class="lb u" style="left:122.69999999999999px;top:295.2px">ScrollBar</div><svg style="left:166.6px;top:260.7px" width="32" height="32" viewBox="0 0 32 32"><ellipse cx="15" cy="24" rx="4.200" ry="3.600" fill="#707070" stroke="#202020" stroke-width=".8"/><circle cx="13.800" cy="22.800" r="1.200" fill="#d0d0d0"/><ellipse cx="26" cy="25.500" rx="4.200" ry="3.600" fill="#707070" stroke="#202020" stroke-width=".8"/><circle cx="24.800" cy="24.300" r="1.200" fill="#d0d0d0"/><path d="M17.500 24 L17.500 2 L30 8 L30 25.500 L28.500 25.500 L28.500 13 L19 8.500 L19 24 Z" fill="#080808"/><path d="M17.500 2 L30 8 L30 12 L17.500 6 Z" fill="#000"/><g transform="translate(0,0)"><path d="M2 22 L5 19.500 L7.500 25 L13.500 13 L17.500 12 L9 31.500 L6 31.500 Z" fill="#000" opacity=".8"/><path d="M.5 21 L3.500 18.300 L6.500 24.500 L12.500 12.300 L16.500 11 L8 30.500 L5 30.500 Z" fill="#e00818" stroke="#600" stroke-width=".7"/><path d="M2 21 L3.300 20 L6.500 26.500 L13 13.500" fill="none" stroke="#ff9090" stroke-width=".9"/></g></svg><div class="lb u" style="left:182.60000000000002px;top:295.2px">Sounds</div><svg style="left:226.6px;top:260.7px" width="32" height="32" viewBox="0 0 32 32"><path d="M4 6 C8 1 20 1 24 8 L24 22 C20 29 8 29 4 22 Z" fill="#207878" stroke="#002828" stroke-width="1"/><circle cx="14" cy="14" r="7.500" fill="#f0f0f0" stroke="#202020" stroke-width="1"/><path d="M14 8v6l4 3" stroke="#000" stroke-width="1.200" fill="none"/><g transform="translate(0,0)"><path d="M2 22 L5 19.500 L7.500 25 L13.500 13 L17.500 12 L9 31.500 L6 31.500 Z" fill="#000" opacity=".8"/><path d="M.5 21 L3.500 18.300 L6.500 24.500 L12.500 12.300 L16.500 11 L8 30.500 L5 30.500 Z" fill="#e00818" stroke="#600" stroke-width=".7"/><path d="M2 21 L3.300 20 L6.500 26.500 L13 13.500" fill="none" stroke="#ff9090" stroke-width=".9"/></g></svg><div class="lb u" style="left:242.60000000000002px;top:295.2px">Time</div><svg style="left:46.7px;top:320.7px" width="32" height="32" viewBox="0 0 32 32"><polygon points="3,12 16,5 29,11 16,19" fill="#e8c890" stroke="#402000" stroke-width=".8"/><polygon points="3,12 16,19 16,31 11,29 11,22 8,20.500 8,27 3,24" fill="#c89858" stroke="#402000" stroke-width=".8"/><polygon points="16,19 29,11 29,24 24,27 24,20 21,22 21,29 16,31" fill="#a87838" stroke="#402000" stroke-width=".8"/><polygon points="12,6 19,3 25,6 18,9.500" fill="#30b040" stroke="#003000" stroke-width=".6"/><polygon points="10,11 15,9 19,11 14,13.500" fill="#fff" stroke="#606060" stroke-width=".5"/><rect x="19" y="1" width="5" height="3" fill="#404040"/></svg><div class="lb u" style="left:62.69999999999999px;top:355.2px">Workspaces</div><svg style="left:106.7px;top:320.7px" width="32" height="32" viewBox="0 0 32 32"><polygon points="8,6 14,3 20,6 20,17 14,20 8,17" fill="#2848c8" stroke="#001040" stroke-width=".8"/><polygon points="14,9 20,6 20,17 14,20" fill="#102890"/><polygon points="9,8 13,10 13,14 9,12" fill="#90c8ff"/><polygon points="18,18 25,15 31,18 24,22" fill="#e0e0e0" stroke="#303030" stroke-width=".8"/><polygon points="18,18 24,22 24,26 18,22" fill="#a0a0a0" stroke="#303030" stroke-width=".6"/><polygon points="24,22 31,18 31,22 24,26" fill="#808080" stroke="#303030" stroke-width=".6"/><text x="18" y="6" font-size="5.600" font-weight="bold" fill="#e01020" font-family="Liberation Sans,sans-serif">CAPI</text><g transform="translate(0,0)"><path d="M2 22 L5 19.500 L7.500 25 L13.500 13 L17.500 12 L9 31.500 L6 31.500 Z" fill="#000" opacity=".8"/><path d="M.5 21 L3.500 18.300 L6.500 24.500 L12.500 12.300 L16.500 11 L8 30.500 L5 30.500 Z" fill="#e00818" stroke="#600" stroke-width=".7"/><path d="M2 21 L3.300 20 L6.500 26.500 L13 13.500" fill="none" stroke="#ff9090" stroke-width=".9"/></g></svg><div class="lb u" style="left:122.69999999999999px;top:355.2px">CAPI</div><svg style="left:158.5px;top:320.7px" width="32" height="32" viewBox="0 0 32 32"><polygon points="2,12 17,4 30,9 30,24 16,31 2,25" fill="#202020" stroke="#000" stroke-width="1"/><polygon points="2,12 16,17 16,31 2,25" fill="#383838"/><polygon points="16,17 30,9 30,24 16,31" fill="#101010"/><polygon points="5,10.500 17,4.500 28,9 16,15" fill="#3858d8" stroke="#000830" stroke-width=".6"/><polygon points="11,8 18,5 24,7.500 17,10.500" fill="#f0f0f8"/><polygon points="9,11.500 13,9.800 17,11.500 13,13.300" fill="#1c2c80"/><polygon points="4,15 14,18.500 14,21 4,17.500" fill="#3858d8"/><polygon points="4,19 14,22.500 14,25 4,21.500" fill="#2848b8"/><polygon points="4,22.500 14,26 14,28.500 4,25" fill="#6080e0"/><polygon points="18,18 28,12.500 28,15 18,20.500" fill="#404858"/><path d="M20 19 L27 24.500 L29 21 L32 30 L22 30.500 L25 27.500 L18.500 22 Z" fill="#f8a818" stroke="#402000" stroke-width=".7"/></svg><div class="lb u" style="left:174.5px;top:355.2px">Installer</div><svg style="left:226.6px;top:320.7px" width="32" height="32" viewBox="0 0 32 32"><g transform="translate(0,2) scale(1)"><polygon points="1,18.500 18.500,27.500 30.500,17.500 30.500,9.500 13,0 1,10.500" fill="#303030" stroke="#303030" stroke-width="1.400" stroke-linejoin="round"/><polygon points="13,0 30.500,9.500 18.500,19.500 1,10.500" fill="#d0d0f0"/><polygon points="1,10.500 18.500,19.500 18.500,27.500 1,18.500" fill="#a0a0d8"/><polygon points="18.500,19.500 30.500,9.500 30.500,17.500 18.500,27.500" fill="#7878b0"/><path d="M1.500 11 L18.500 20 L30 10" stroke="#f8f8f8" stroke-width=".7" fill="none"/><rect x="3.500" y="14.800" width="2.600" height="2" fill="#20c020"/><rect x="6.500" y="16.300" width="2" height="1.600" fill="#d03030"/></g></svg><div class="lb u" style="left:242.60000000000002px;top:355.2px">SCSIProbe</div><svg style="left:286.6px;top:320.7px" width="32" height="32" viewBox="0 0 32 32"><polygon points="2,12 17,4 30,9 30,24 16,31 2,25" fill="#202020" stroke="#000" stroke-width="1"/><polygon points="2,12 16,17 16,31 2,25" fill="#383838"/><polygon points="16,17 30,9 30,24 16,31" fill="#101010"/><polygon points="5,10.500 17,4.500 28,9 16,15" fill="#3858d8" stroke="#000830" stroke-width=".6"/><polygon points="11,8 18,5 24,7.500 17,10.500" fill="#f0f0f8"/><polygon points="9,11.500 13,9.800 17,11.500 13,13.300" fill="#1c2c80"/><polygon points="4,15 14,18.500 14,21 4,17.500" fill="#3858d8"/><polygon points="4,19 14,22.500 14,25 4,21.500" fill="#2848b8"/><polygon points="4,22.500 14,26 14,28.500 4,25" fill="#6080e0"/><polygon points="18,18 28,12.500 28,15 18,20.500" fill="#404858"/><path d="M20 19 L27 24.500 L29 21 L32 30 L22 30.500 L25 27.500 L18.500 22 Z" fill="#f8a818" stroke="#402000" stroke-width=".7"/></svg><div class="lb u" style="left:302.6px;top:355.2px">Uninstall</div></div><div class="sb" style="left:495px;top:49.5px;width:15px;height:388.5px"></div><div class="sa" style="left:495px;top:49.5px;width:15px;height:15px"><svg style="left:0;top:0" width="15" height="15"><polygon points="7.500,4 11.500,10.500 3.500,10.500" fill="#f6f6f6" stroke="#b4b4b4" stroke-width="1"/></svg></div><div class="sa" style="left:495px;top:63.5px;width:15px;height:15px"><svg style="left:0;top:0" width="15" height="15"><polygon points="7.500,11 11.500,4.500 3.500,4.500" fill="#f6f6f6" stroke="#b4b4b4" stroke-width="1"/></svg></div><div class="sa" style="left:495px;top:409.0px;width:15px;height:15px"><svg style="left:0;top:0" width="15" height="15"><polygon points="7.500,4 11.500,10.500 3.500,10.500" fill="#f6f6f6" stroke="#b4b4b4" stroke-width="1"/></svg></div><div class="sa" style="left:495px;top:423.0px;width:15px;height:15px"><svg style="left:0;top:0" width="15" height="15"><polygon points="7.500,11 11.500,4.500 3.500,4.500" fill="#f6f6f6" stroke="#b4b4b4" stroke-width="1"/></svg></div><div class="st" style="left:4px;top:436.0px;width:69.5px;height:15px">31 Einträge</div><div class="sb" style="left:72.5px;top:436.0px;width:423.5px;height:15px"></div><div class="sa" style="left:72.5px;top:436.0px;width:15px;height:15px"><svg style="left:0;top:0" width="15" height="15"><polygon points="4,7.500 10.500,3.500 10.500,11.500" fill="#f6f6f6" stroke="#b4b4b4" stroke-width="1"/></svg></div><div class="sa" style="left:86.5px;top:436.0px;width:15px;height:15px"><svg style="left:0;top:0" width="15" height="15"><polygon points="11,7.500 4.500,3.500 4.500,11.500" fill="#f6f6f6" stroke="#b4b4b4" stroke-width="1"/></svg></div><div class="sa" style="left:467.0px;top:436.0px;width:15px;height:15px"><svg style="left:0;top:0" width="15" height="15"><polygon points="4,7.500 10.500,3.500 10.500,11.500" fill="#f6f6f6" stroke="#b4b4b4" stroke-width="1"/></svg></div><div class="sa" style="left:481.0px;top:436.0px;width:15px;height:15px"><svg style="left:0;top:0" width="15" height="15"><polygon points="11,7.500 4.500,3.500 4.500,11.500" fill="#f6f6f6" stroke="#b4b4b4" stroke-width="1"/></svg></div><div class="a" style="left:496px;top:437.0px;width:13px;height:13px;background:#d8d8d8;box-shadow:inset 1px 1px 0 #fff"><i style="position:absolute;left:3px;top:7px;width:1px;height:1px;background:#787878"></i><i style="position:absolute;left:3px;top:9px;width:1px;height:1px;background:#787878"></i><i style="position:absolute;left:3px;top:11px;width:1px;height:1px;background:#787878"></i><i style="position:absolute;left:5px;top:5px;width:1px;height:1px;background:#787878"></i><i style="position:absolute;left:5px;top:7px;width:1px;height:1px;background:#787878"></i><i style="position:absolute;left:5px;top:9px;width:1px;height:1px;background:#787878"></i><i style="position:absolute;left:5px;top:11px;width:1px;height:1px;background:#787878"></i><i style="position:absolute;left:7px;top:3px;width:1px;height:1px;background:#787878"></i><i style="position:absolute;left:7px;top:5px;width:1px;height:1px;background:#787878"></i><i style="position:absolute;left:7px;top:7px;width:1px;height:1px;background:#787878"></i><i style="position:absolute;left:7px;top:9px;width:1px;height:1px;background:#787878"></i><i style="position:absolute;left:7px;top:11px;width:1px;height:1px;background:#787878"></i><i style="position:absolute;left:9px;top:3px;width:1px;height:1px;background:#787878"></i><i style="position:absolute;left:9px;top:5px;width:1px;height:1px;background:#787878"></i><i style="position:absolute;left:9px;top:7px;width:1px;height:1px;background:#787878"></i><i style="position:absolute;left:9px;top:9px;width:1px;height:1px;background:#787878"></i><i style="position:absolute;left:9px;top:11px;width:1px;height:1px;background:#787878"></i><i style="position:absolute;left:11px;top:3px;width:1px;height:1px;background:#787878"></i><i style="position:absolute;left:11px;top:5px;width:1px;height:1px;background:#787878"></i><i style="position:absolute;left:11px;top:7px;width:1px;height:1px;background:#787878"></i><i style="position:absolute;left:11px;top:9px;width:1px;height:1px;background:#787878"></i><i style="position:absolute;left:11px;top:11px;width:1px;height:1px;background:#787878"></i></div></div><div class="tab" style="left:164px;top:113.5px;width:270px;height:19.500px"><div class="cb"></div><span style="position:absolute;left:36px;top:.5px">/boot/home/config/be/Preferences</span><div class="zb"><i></i><i></i></div></div>
<div class="win" style="left:404px;top:296px;width:484px;height:238px"><div class="mb" style="left:5px;top:5px;width:474px;height:19px"><span style="left:7.5px">Datei</span><span style="left:52.5px">Fenster</span><span style="left:110.5px">Attribute</span></div><div class="nb" style="left:5px;top:24px;width:474px;height:26.5px"><svg style="left:3.5px;top:6px" width="16" height="14" viewBox="0 0 16 14"><path d="M1 7 L7 1 L7 4.500 L14 4.500 L14 9.500 L7 9.500 L7 13 Z" fill="#20c030" stroke="#000" stroke-width="1.300"/></svg><svg style="left:36px;top:6px" width="16" height="14" viewBox="0 0 16 14"><path d="M15 7 L9 1 L9 4.500 L2 4.500 L2 9.500 L9 9.500 L9 13 Z" fill="#b4b4b4" stroke="#000" stroke-width="1.300"/></svg><svg style="left:68.5px;top:5px" width="16" height="15" viewBox="0 0 16 15"><path d="M8 1 L15 8 L11.500 8 L11.500 14 L4.500 14 L4.500 8 L1 8 Z" fill="#ffa800" stroke="#000" stroke-width="1.300"/></svg><div class="pt" style="left:100px;top:4.500px;width:373px;height:18px">/boot</div></div><div class="wh" style="left:5px;top:50.5px;width:461px;height:169.5px;overflow:hidden"><div class="a" style="left:0;top:0;width:30px;height:18px;background:#d8d8d8;box-shadow:inset 1px 1px 0 #fff,inset -1px -1px 0 #989898;font-size:9px;font-weight:bold;line-height:19px;color:#303030;"></div><div class="a" style="left:30px;top:0;width:159px;height:18px;background:#d8d8d8;box-shadow:inset 1px 1px 0 #fff,inset -1px -1px 0 #989898;font-size:9px;font-weight:bold;line-height:19px;color:#303030;padding-left:11px"><span style="text-decoration:underline">Name</span></div><div class="a" style="left:189px;top:0;width:96px;height:18px;background:#d8d8d8;box-shadow:inset 1px 1px 0 #fff,inset -1px -1px 0 #989898;font-size:9px;font-weight:bold;line-height:19px;color:#303030;text-align:right;padding-right:7px">Größe</div><div class="a" style="left:285px;top:0;width:165px;height:18px;background:#d8d8d8;box-shadow:inset 1px 1px 0 #fff,inset -1px -1px 0 #989898;font-size:9px;font-weight:bold;line-height:19px;color:#303030;text-align:right;padding-right:7px">Geändert</div><div class="a" style="left:450px;top:0;width:14px;height:18px;background:#d8d8d8;box-shadow:inset 1px 1px 0 #fff,inset -1px -1px 0 #989898;font-size:9px;font-weight:bold;line-height:19px;color:#303030;"></div><svg style="left:19px;top:23.6px" width="16" height="16" viewBox="0 0 16 16"><polygon points="3,3 8,1 15,4 15,13 11,16 3,12" fill="#b07820" stroke="#000" stroke-width="1.200"/><polygon points="4.500,4.500 9,2.500 13,4.500 13,12 5.500,10" fill="#fff" stroke="#606060" stroke-width=".5"/><polygon points="1.500,6.500 9,10 12,15.500 3.500,12" fill="#f0c060" stroke="#000" stroke-width="1"/><polygon points="9,10 15,5.500 15,13 12,15.500" fill="#c89030" stroke="#000" stroke-width=".9"/><circle cx="4" cy="12" r="2.500" fill="#d02020"/><rect x="1" y="12" width="3" height="3" fill="#2040c0"/></svg><div class="a" style="left:41px;top:24.6px;font-size:10.600px;line-height:13px;white-space:nowrap">apps</div><div class="a" style="left:277px;top:24.6px;font-size:10px;line-height:13px">-</div><div class="a" style="right:15px;top:24.6px;font-size:10px;line-height:13px;white-space:nowrap">So, 2003 Juni 08, 09:02:12 PM</div><svg style="left:19px;top:43.6px" width="16" height="16" viewBox="0 0 16 16"><polygon points="3,3 8,1 15,4 15,13 11,16 3,12" fill="#b07820" stroke="#000" stroke-width="1.200"/><polygon points="4.500,4.500 9,2.500 13,4.500 13,12 5.500,10" fill="#fff" stroke="#606060" stroke-width=".5"/><polygon points="1.500,6.500 9,10 12,15.500 3.500,12" fill="#f0c060" stroke="#000" stroke-width="1"/><polygon points="9,10 15,5.500 15,13 12,15.500" fill="#c89030" stroke="#000" stroke-width=".9"/><rect x="0" y="8" width="7" height="7" fill="#d01828" stroke="#400" stroke-width=".5"/><rect x="2" y="10" width="3" height="3" fill="#fff"/></svg><div class="a" style="left:41px;top:44.6px;font-size:10.600px;line-height:13px;white-space:nowrap">beos</div><div class="a" style="left:277px;top:44.6px;font-size:10px;line-height:13px">-</div><div class="a" style="right:15px;top:44.6px;font-size:10px;line-height:13px;white-space:nowrap">Sa, 2003 Juni 07, 02:33:54 AM</div><svg style="left:19px;top:63.6px" width="16" height="16" viewBox="0 0 16 16"><polygon points="3,3 8,1 15,4 15,13 11,16 3,12" fill="#b07820" stroke="#000" stroke-width="1.200"/><polygon points="4.500,4.500 9,2.500 13,4.500 13,12 5.500,10" fill="#fff" stroke="#606060" stroke-width=".5"/><polygon points="1.500,6.500 9,10 12,15.500 3.500,12" fill="#f0c060" stroke="#000" stroke-width="1"/><polygon points="9,10 15,5.500 15,13 12,15.500" fill="#c89030" stroke="#000" stroke-width=".9"/><circle cx="4" cy="11.500" r="3.500" fill="#2060d0"/><path d="M2 11l2-2 2 3" stroke="#40e040" stroke-width="1.200" fill="none"/></svg><div class="a" style="left:41px;top:64.6px;font-size:10.600px;line-height:13px;white-space:nowrap">demos</div><div class="a" style="left:277px;top:64.6px;font-size:10px;line-height:13px">-</div><div class="a" style="right:15px;top:64.6px;font-size:10px;line-height:13px;white-space:nowrap">Sa, 2003 Juni 07, 02:35:25 AM</div><svg style="left:19px;top:83.6px" width="16" height="16" viewBox="0 0 16 16"><polygon points="3,3 8,1 15,4 15,13 11,16 3,12" fill="#b07820" stroke="#000" stroke-width="1.200"/><polygon points="4.500,4.500 9,2.500 13,4.500 13,12 5.500,10" fill="#fff" stroke="#606060" stroke-width=".5"/><polygon points="1.500,6.500 9,10 12,15.500 3.500,12" fill="#f0c060" stroke="#000" stroke-width="1"/><polygon points="9,10 15,5.500 15,13 12,15.500" fill="#c89030" stroke="#000" stroke-width=".9"/><path d="M1 15l5-6 2 2-5 5z" fill="#d02020" stroke="#400" stroke-width=".5"/></svg><div class="a" style="left:41px;top:84.6px;font-size:10.600px;line-height:13px;white-space:nowrap">develop</div><div class="a" style="left:277px;top:84.6px;font-size:10px;line-height:13px">-</div><div class="a" style="right:15px;top:84.6px;font-size:10px;line-height:13px;white-space:nowrap">Sa, 2003 Juni 07, 02:37:33 AM</div><svg style="left:19px;top:103.6px" width="16" height="16" viewBox="0 0 16 16"><polygon points="3,3 8,1 15,4 15,13 11,16 3,12" fill="#b07820" stroke="#000" stroke-width="1.200"/><polygon points="4.500,4.500 9,2.500 13,4.500 13,12 5.500,10" fill="#fff" stroke="#606060" stroke-width=".5"/><polygon points="1.500,6.500 9,10 12,15.500 3.500,12" fill="#f0c060" stroke="#000" stroke-width="1"/><polygon points="9,10 15,5.500 15,13 12,15.500" fill="#c89030" stroke="#000" stroke-width=".9"/><polygon points="0,11 4,7 8,11" fill="#d02020"/><rect x="1.500" y="11" width="5" height="4" fill="#fff" stroke="#333" stroke-width=".5"/></svg><div class="a" style="left:41px;top:104.6px;font-size:10.600px;line-height:13px;white-space:nowrap">home</div><svg style="left:19px;top:123.6px" width="16" height="16" viewBox="0 0 16 16"><polygon points="3,3 8,1 15,4 15,13 11,16 3,12" fill="#b07820" stroke="#000" stroke-width="1.200"/><polygon points="4.500,4.500 9,2.500 13,4.500 13,12 5.500,10" fill="#fff" stroke="#606060" stroke-width=".5"/><polygon points="1.500,6.500 9,10 12,15.500 3.500,12" fill="#f0c060" stroke="#000" stroke-width="1"/><polygon points="9,10 15,5.500 15,13 12,15.500" fill="#c89030" stroke="#000" stroke-width=".9"/><path d="M1 11l2 3 5-8" stroke="#e01020" stroke-width="2" fill="none"/></svg><div class="a" style="left:41px;top:124.6px;font-size:10.600px;line-height:13px;border-bottom:1px solid #aaa;white-space:nowrap">preferences</div></div><div class="sb" style="left:465px;top:49.5px;width:15px;height:171.5px"></div><div class="sa" style="left:465px;top:49.5px;width:15px;height:15px"><svg style="left:0;top:0" width="15" height="15"><polygon points="7.500,4 11.500,10.500 3.500,10.500" fill="#f6f6f6" stroke="#b4b4b4" stroke-width="1"/></svg></div><div class="sa" style="left:465px;top:63.5px;width:15px;height:15px"><svg style="left:0;top:0" width="15" height="15"><polygon points="7.500,11 11.500,4.500 3.500,4.500" fill="#f6f6f6" stroke="#b4b4b4" stroke-width="1"/></svg></div><div class="sa" style="left:465px;top:192.0px;width:15px;height:15px"><svg style="left:0;top:0" width="15" height="15"><polygon points="7.500,4 11.500,10.500 3.500,10.500" fill="#f6f6f6" stroke="#b4b4b4" stroke-width="1"/></svg></div><div class="sa" style="left:465px;top:206.0px;width:15px;height:15px"><svg style="left:0;top:0" width="15" height="15"><polygon points="7.500,11 11.500,4.500 3.500,4.500" fill="#f6f6f6" stroke="#b4b4b4" stroke-width="1"/></svg></div><div class="st" style="left:4px;top:219.0px;width:69.5px;height:15px">6 Einträge</div><div class="sb" style="left:72.5px;top:219.0px;width:393.5px;height:15px"></div><div class="sa" style="left:72.5px;top:219.0px;width:15px;height:15px"><svg style="left:0;top:0" width="15" height="15"><polygon points="4,7.500 10.500,3.500 10.500,11.500" fill="#f6f6f6" stroke="#b4b4b4" stroke-width="1"/></svg></div><div class="sa" style="left:86.5px;top:219.0px;width:15px;height:15px"><svg style="left:0;top:0" width="15" height="15"><polygon points="11,7.500 4.500,3.500 4.500,11.500" fill="#f6f6f6" stroke="#b4b4b4" stroke-width="1"/></svg></div><div class="sa" style="left:437.0px;top:219.0px;width:15px;height:15px"><svg style="left:0;top:0" width="15" height="15"><polygon points="4,7.500 10.500,3.500 10.500,11.500" fill="#f6f6f6" stroke="#b4b4b4" stroke-width="1"/></svg></div><div class="sa" style="left:451.0px;top:219.0px;width:15px;height:15px"><svg style="left:0;top:0" width="15" height="15"><polygon points="11,7.500 4.500,3.500 4.500,11.500" fill="#f6f6f6" stroke="#b4b4b4" stroke-width="1"/></svg></div><div class="a" style="left:466px;top:220.0px;width:13px;height:13px;background:#d8d8d8;box-shadow:inset 1px 1px 0 #fff"><i style="position:absolute;left:3px;top:7px;width:1px;height:1px;background:#787878"></i><i style="position:absolute;left:3px;top:9px;width:1px;height:1px;background:#787878"></i><i style="position:absolute;left:3px;top:11px;width:1px;height:1px;background:#787878"></i><i style="position:absolute;left:5px;top:5px;width:1px;height:1px;background:#787878"></i><i style="position:absolute;left:5px;top:7px;width:1px;height:1px;background:#787878"></i><i style="position:absolute;left:5px;top:9px;width:1px;height:1px;background:#787878"></i><i style="position:absolute;left:5px;top:11px;width:1px;height:1px;background:#787878"></i><i style="position:absolute;left:7px;top:3px;width:1px;height:1px;background:#787878"></i><i style="position:absolute;left:7px;top:5px;width:1px;height:1px;background:#787878"></i><i style="position:absolute;left:7px;top:7px;width:1px;height:1px;background:#787878"></i><i style="position:absolute;left:7px;top:9px;width:1px;height:1px;background:#787878"></i><i style="position:absolute;left:7px;top:11px;width:1px;height:1px;background:#787878"></i><i style="position:absolute;left:9px;top:3px;width:1px;height:1px;background:#787878"></i><i style="position:absolute;left:9px;top:5px;width:1px;height:1px;background:#787878"></i><i style="position:absolute;left:9px;top:7px;width:1px;height:1px;background:#787878"></i><i style="position:absolute;left:9px;top:9px;width:1px;height:1px;background:#787878"></i><i style="position:absolute;left:9px;top:11px;width:1px;height:1px;background:#787878"></i><i style="position:absolute;left:11px;top:3px;width:1px;height:1px;background:#787878"></i><i style="position:absolute;left:11px;top:5px;width:1px;height:1px;background:#787878"></i><i style="position:absolute;left:11px;top:7px;width:1px;height:1px;background:#787878"></i><i style="position:absolute;left:11px;top:9px;width:1px;height:1px;background:#787878"></i><i style="position:absolute;left:11px;top:11px;width:1px;height:1px;background:#787878"></i></div></div><div class="tab" style="left:404px;top:278.5px;width:100px;height:19.500px"><div class="cb"></div><span style="position:absolute;left:36px;top:.5px">/boot</span><div class="zb"><i></i><i></i></div></div>
<div class="win" style="left:568px;top:440px;width:445px;height:317px"><div class="a" style="left:6.7px;top:33.9px;width:433.2px;height:232.7px;box-shadow:inset 1px 1px 0 #fff,inset -1px -1px 0 #989898,0 1px 0 #fff"></div><div class="a" style="left:12.4px;top:17.0px;width:58.7px;height:18.6px;background:#d8d8d8;border-radius:5px 5px 0 0;box-shadow:inset 1px 1px 0 #fff,inset -1px 0 0 #989898;font-size:10px;line-height:17px;text-align:center">Identity</div><div class="a" style="left:70.8px;top:18.2px;width:62.3px;height:15.7px;background:#d8d8d8;border-radius:5px 5px 0 0;box-shadow:inset 1px 1px 0 #fff,inset -1px 0 0 #989898;font-size:10px;line-height:16px;text-align:center">Services</div><div class="a" style="left:17.0px;top:53.1px;width:414.4px;height:75.2px;box-shadow:inset 1px 1px 0 #989898,inset -1px -1px 0 #fff,inset 2px 2px 0 #fff,inset -2px -2px 0 #989898"></div><div class="a" style="left:25.0px;top:46.1px;background:#d8d8d8;font-size:12px;font-weight:bold;line-height:15px;padding:0 3px;white-space:nowrap">Names</div><div class="a" style="left:17.0px;top:145.2px;width:414.4px;height:110.6px;box-shadow:inset 1px 1px 0 #989898,inset -1px -1px 0 #fff,inset 2px 2px 0 #fff,inset -2px -2px 0 #989898"></div><div class="a" style="left:25.0px;top:138.2px;background:#d8d8d8;font-size:12px;font-weight:bold;line-height:15px;padding:0 3px;white-space:nowrap">Network Interfaces</div><div class="pt" style="left:105.4px;top:67.6px;width:106.9px;height:17.7px;line-height:17.7px;font-size:10px"></div><div class="pt" style="left:105.4px;top:97.6px;width:106.9px;height:17.7px;line-height:17.7px;font-size:10px">vimba</div><div class="pt" style="left:309.5px;top:67.6px;width:107.3px;height:17.7px;line-height:17.7px;font-size:10px">193.99.145.37</div><div class="pt" style="left:309.5px;top:97.6px;width:107.3px;height:17.7px;line-height:17.7px;font-size:10px">193.99.145.37</div><div class="a" style="right:347.2px;top:70.6px;font-size:10px;line-height:13px;white-space:nowrap">Domain name:</div><div class="a" style="right:347.2px;top:99.8px;font-size:10px;line-height:13px;white-space:nowrap">Host name:</div><div class="a" style="right:142.8px;top:70.6px;font-size:10px;line-height:13px;white-space:nowrap">Primary DNS:</div><div class="a" style="right:142.8px;top:99.8px;font-size:10px;line-height:13px;white-space:nowrap">Secondary DNS:</div><div class="a" style="left:30.1px;top:159.8px;width:299.8px;height:83.7px;background:#fff;box-shadow:inset 1px 1px 0 #989898,inset -1px -1px 0 #fff,inset 2px 2px 0 #606060"></div><div class="a" style="left:32.1px;top:161.8px;width:282.8px;height:13px;background:#a0a0a0;font-size:10px;line-height:13px;padding-left:3px;white-space:nowrap">192.168.0.1-&gt;NE2000 compatible PCI (1)-&gt;Ready</div><div class="sb" style="left:314.9px;top:160.8px;width:15px;height:81.7px;background:#e0e0e0"></div><div class="sa" style="left:314.9px;top:160.8px;width:15px;height:15px"><svg style="left:0;top:0" width="15" height="15"><polygon points="7.500,4 11.500,10.500 3.500,10.500" fill="#f6f6f6" stroke="#b4b4b4" stroke-width="1"/></svg></div><div class="sa" style="left:314.9px;top:227.5px;width:15px;height:15px"><svg style="left:0;top:0" width="15" height="15"><polygon points="7.500,11 11.500,4.500 3.500,4.500" fill="#f6f6f6" stroke="#b4b4b4" stroke-width="1"/></svg></div><div class="a" style="left:343.0px;top:157.5px;width:73.8px;height:21.5px;background:#e8e8e8;border-radius:2px;box-shadow:inset 0 0 0 1px #606060,inset 2px 2px 0 #fff,inset -2px -2px 0 #c0c0c0;font-size:10.300px;line-height:23.0px;text-align:center;color:#000;white-space:nowrap">Settings...</div><div class="a" style="left:343.0px;top:186.7px;width:73.8px;height:22.3px;background:#e8e8e8;border-radius:2px;box-shadow:inset 0 0 0 1px #606060,inset 2px 2px 0 #fff,inset -2px -2px 0 #c0c0c0;font-size:10.300px;line-height:23.8px;text-align:center;color:#000;white-space:nowrap">Clear</div><div class="a" style="left:343.0px;top:224.3px;width:73.8px;height:22.3px;background:#e8e8e8;border-radius:2px;box-shadow:inset 0 0 0 1px #606060,inset 2px 2px 0 #fff,inset -2px -2px 0 #c0c0c0;font-size:10.300px;line-height:23.8px;text-align:center;color:#000;white-space:nowrap">Custom...</div><div class="a" style="left:17.0px;top:281.2px;width:109.6px;height:22.2px;background:#e8e8e8;border-radius:2px;box-shadow:inset 0 0 0 1px #606060,inset 2px 2px 0 #fff,inset -2px -2px 0 #c0c0c0;font-size:10.300px;line-height:23.7px;text-align:center;color:#000;white-space:nowrap">Restart Networking</div><div class="a" style="left:151.6px;top:281.9px;width:73.4px;height:21.5px;background:#e8e8e8;border-radius:2px;box-shadow:inset 0 0 0 1px #a8a8a8,inset 2px 2px 0 #fff,inset -2px -2px 0 #c0c0c0;font-size:10.300px;line-height:23.0px;text-align:center;color:#989898;white-space:nowrap">Revert</div><div class="a" style="left:351.3px;top:277.9px;width:81.0px;height:29.5px;box-shadow:inset 0 0 0 1px #b8b8b8,inset 0 0 0 2px #c8c8c8"></div><div class="a" style="left:355.3px;top:281.9px;width:73.0px;height:21.5px;background:#e8e8e8;border-radius:2px;box-shadow:inset 0 0 0 1px #a8a8a8,inset 2px 2px 0 #fff,inset -2px -2px 0 #c0c0c0;font-size:10.300px;line-height:23.0px;text-align:center;color:#989898;white-space:nowrap">Save</div><div class="a" style="left:138.5px;top:281.2px;width:2px;height:22.2px;background:#989898;box-shadow:1px 0 0 #fff"></div></div><div class="tab" style="left:568px;top:422.5px;width:102px;height:19.500px"><div class="cb"></div><span style="position:absolute;left:36px;top:-1px">Network</span></div>
<div class="win act" style="left:21px;top:605px;width:292.5px;height:155.5px"><div class="mb" style="left:5px;top:5px;width:282.5px;height:19px"><span style="left:7.5px">Datei</span><span style="left:52.5px">Fenster</span></div><div class="nb" style="left:5px;top:24px;width:282.5px;height:26.5px"><svg style="left:3.5px;top:6px" width="16" height="14" viewBox="0 0 16 14"><path d="M1 7 L7 1 L7 4.500 L14 4.500 L14 9.500 L7 9.500 L7 13 Z" fill="#b4b4b4" stroke="#000" stroke-width="1.300"/></svg><svg style="left:36px;top:6px" width="16" height="14" viewBox="0 0 16 14"><path d="M15 7 L9 1 L9 4.500 L2 4.500 L2 9.500 L9 9.500 L9 13 Z" fill="#20c030" stroke="#000" stroke-width="1.300"/></svg><svg style="left:68.5px;top:5px" width="16" height="15" viewBox="0 0 16 15"><path d="M8 1 L15 8 L11.500 8 L11.500 14 L4.500 14 L4.500 8 L1 8 Z" fill="#b4b4b4" stroke="#000" stroke-width="1.300"/></svg><div class="pt" style="left:100px;top:4.500px;width:181.5px;height:18px">/</div></div><div class="wh" style="left:5px;top:50.5px;width:269.5px;height:87.0px;overflow:hidden"><svg style="left:33.1px;top:20.9px" width="32" height="32" viewBox="0 0 32 32"><g transform="translate(0,4.5) scale(0.86)"><polygon points="1,18.500 18.500,27.500 30.500,17.500 30.500,9.500 13,0 1,10.500" fill="#303030" stroke="#303030" stroke-width="1.400" stroke-linejoin="round"/><polygon points="13,0 30.500,9.500 18.500,19.500 1,10.500" fill="#707070"/><polygon points="1,10.500 18.500,19.500 18.500,27.500 1,18.500" fill="#505050"/><polygon points="18.500,19.500 30.500,9.500 30.500,17.500 18.500,27.500" fill="#383838"/><path d="M1.500 11 L18.500 20 L30 10" stroke="#f8f8f8" stroke-width=".7" fill="none"/><rect x="3.500" y="14.800" width="2.600" height="2" fill="#20c020"/><rect x="6.500" y="16.300" width="2" height="1.600" fill="#d03030"/></g><rect x="1" y="18" width="9" height="9" fill="#c01828" stroke="#400" stroke-width=".6"/><text x="3" y="25.500" font-size="7" font-weight="bold" fill="#f8b0b0" font-family="Liberation Sans,sans-serif">9</text><rect x="25.500" y="2" width="6.500" height="27" fill="#f4f4f4" stroke="#202020" stroke-width=".9"/><rect x="26" y="18" width="5.500" height="10.5" fill="#30c030"/><rect x="30" y="2.500" width="1.500" height="26" fill="#000" opacity=".25"/></svg><div class="lb" style="left:50.099999999999994px;top:54.9px;background:#b4b4b4;color:#484848;padding:0 1px;">beos-volume</div><svg style="left:92.3px;top:20.9px" width="32" height="32" viewBox="0 0 32 32"><polygon points="1,17 15,8 25,13 25,17 11,28 1,21" fill="#282828" stroke="#000" stroke-width=".8"/><polygon points="7,14 15,9.500 21,12.500 13,17.500" fill="#f0f0f0"/><polygon points="9,13 15,9.700 17,10.700 11,14" fill="#3040d0"/><polygon points="13,15 18,12 21,12.500 15,16.500" fill="#e03040"/><polygon points="9,22 15,18 18,19.500 12,24" fill="#808080"/><rect x="25.500" y="2" width="6.500" height="27" fill="#f4f4f4" stroke="#202020" stroke-width=".9"/><rect x="26" y="12" width="5.500" height="16.5" fill="#30c030"/><rect x="30" y="2.500" width="1.500" height="26" fill="#000" opacity=".25"/></svg><div class="lb" style="left:109.30000000000001px;top:54.9px;">no name</div><svg style="left:152.3px;top:20.9px" width="32" height="32" viewBox="0 0 32 32"><g transform="translate(0,4.5) scale(0.86)"><polygon points="1,18.500 18.500,27.500 30.500,17.500 30.500,9.500 13,0 1,10.500" fill="#303030" stroke="#303030" stroke-width="1.400" stroke-linejoin="round"/><polygon points="13,0 30.500,9.500 18.500,19.500 1,10.500" fill="#e0e0e0"/><polygon points="1,10.500 18.500,19.500 18.500,27.500 1,18.500" fill="#b8b8b8"/><polygon points="18.500,19.500 30.500,9.500 30.500,17.500 18.500,27.500" fill="#808080"/><path d="M1.500 11 L18.500 20 L30 10" stroke="#f8f8f8" stroke-width=".7" fill="none"/><rect x="3.500" y="14.800" width="2.600" height="2" fill="#20c020"/><rect x="6.500" y="16.300" width="2" height="1.600" fill="#d03030"/></g><rect x="25.500" y="2" width="6.500" height="27" fill="#f4f4f4" stroke="#202020" stroke-width=".9"/><rect x="26" y="12" width="5.500" height="16.5" fill="#30c030"/><rect x="30" y="2.500" width="1.500" height="26" fill="#000" opacity=".25"/></svg><div class="lb" style="left:169.3px;top:54.9px;">Sebastian</div><svg style="left:212.2px;top:20.9px" width="32" height="32" viewBox="0 0 32 32"><g transform="translate(0,4.5) scale(0.86)"><polygon points="1,18.500 18.500,27.500 30.500,17.500 30.500,9.500 13,0 1,10.500" fill="#303030" stroke="#303030" stroke-width="1.400" stroke-linejoin="round"/><polygon points="13,0 30.500,9.500 18.500,19.500 1,10.500" fill="#e0e0e0"/><polygon points="1,10.500 18.500,19.500 18.500,27.500 1,18.500" fill="#b8b8b8"/><polygon points="18.500,19.500 30.500,9.500 30.500,17.500 18.500,27.500" fill="#808080"/><path d="M1.500 11 L18.500 20 L30 10" stroke="#f8f8f8" stroke-width=".7" fill="none"/><rect x="3.500" y="14.800" width="2.600" height="2" fill="#20c020"/><rect x="6.500" y="16.300" width="2" height="1.600" fill="#d03030"/></g><rect x="25.500" y="2" width="6.500" height="27" fill="#f4f4f4" stroke="#202020" stroke-width=".9"/><rect x="26" y="10" width="5.500" height="18.5" fill="#30c030"/><rect x="30" y="2.500" width="1.500" height="26" fill="#000" opacity=".25"/></svg><div class="lb" style="left:229.2px;top:54.9px;">System</div></div><div class="sb" style="left:273.5px;top:49.5px;width:15px;height:89.0px"></div><div class="sa" style="left:273.5px;top:49.5px;width:15px;height:15px"><svg style="left:0;top:0" width="15" height="15"><polygon points="7.500,4 11.500,10.500 3.500,10.500" fill="#f6f6f6" stroke="#b4b4b4" stroke-width="1"/></svg></div><div class="sa" style="left:273.5px;top:123.5px;width:15px;height:15px"><svg style="left:0;top:0" width="15" height="15"><polygon points="7.500,11 11.500,4.500 3.500,4.500" fill="#f6f6f6" stroke="#b4b4b4" stroke-width="1"/></svg></div><div class="st" style="left:4px;top:136.5px;width:69.5px;height:15px">4 Einträge</div><div class="sb" style="left:72.5px;top:136.5px;width:202.0px;height:15px"></div><div class="sa" style="left:72.5px;top:136.5px;width:15px;height:15px"><svg style="left:0;top:0" width="15" height="15"><polygon points="4,7.500 10.500,3.500 10.500,11.500" fill="#f6f6f6" stroke="#b4b4b4" stroke-width="1"/></svg></div><div class="sa" style="left:86.5px;top:136.5px;width:15px;height:15px"><svg style="left:0;top:0" width="15" height="15"><polygon points="11,7.500 4.500,3.500 4.500,11.500" fill="#f6f6f6" stroke="#b4b4b4" stroke-width="1"/></svg></div><div class="sa" style="left:245.5px;top:136.5px;width:15px;height:15px"><svg style="left:0;top:0" width="15" height="15"><polygon points="4,7.500 10.500,3.500 10.500,11.500" fill="#f6f6f6" stroke="#b4b4b4" stroke-width="1"/></svg></div><div class="sa" style="left:259.5px;top:136.5px;width:15px;height:15px"><svg style="left:0;top:0" width="15" height="15"><polygon points="11,7.500 4.500,3.500 4.500,11.500" fill="#f6f6f6" stroke="#b4b4b4" stroke-width="1"/></svg></div><div class="a" style="left:274.5px;top:137.5px;width:13px;height:13px;background:#d8d8d8;box-shadow:inset 1px 1px 0 #fff"><i style="position:absolute;left:3px;top:7px;width:1px;height:1px;background:#787878"></i><i style="position:absolute;left:3px;top:9px;width:1px;height:1px;background:#787878"></i><i style="position:absolute;left:3px;top:11px;width:1px;height:1px;background:#787878"></i><i style="position:absolute;left:5px;top:5px;width:1px;height:1px;background:#787878"></i><i style="position:absolute;left:5px;top:7px;width:1px;height:1px;background:#787878"></i><i style="position:absolute;left:5px;top:9px;width:1px;height:1px;background:#787878"></i><i style="position:absolute;left:5px;top:11px;width:1px;height:1px;background:#787878"></i><i style="position:absolute;left:7px;top:3px;width:1px;height:1px;background:#787878"></i><i style="position:absolute;left:7px;top:5px;width:1px;height:1px;background:#787878"></i><i style="position:absolute;left:7px;top:7px;width:1px;height:1px;background:#787878"></i><i style="position:absolute;left:7px;top:9px;width:1px;height:1px;background:#787878"></i><i style="position:absolute;left:7px;top:11px;width:1px;height:1px;background:#787878"></i><i style="position:absolute;left:9px;top:3px;width:1px;height:1px;background:#787878"></i><i style="position:absolute;left:9px;top:5px;width:1px;height:1px;background:#787878"></i><i style="position:absolute;left:9px;top:7px;width:1px;height:1px;background:#787878"></i><i style="position:absolute;left:9px;top:9px;width:1px;height:1px;background:#787878"></i><i style="position:absolute;left:9px;top:11px;width:1px;height:1px;background:#787878"></i><i style="position:absolute;left:11px;top:3px;width:1px;height:1px;background:#787878"></i><i style="position:absolute;left:11px;top:5px;width:1px;height:1px;background:#787878"></i><i style="position:absolute;left:11px;top:7px;width:1px;height:1px;background:#787878"></i><i style="position:absolute;left:11px;top:9px;width:1px;height:1px;background:#787878"></i><i style="position:absolute;left:11px;top:11px;width:1px;height:1px;background:#787878"></i></div></div><div class="tab act" style="left:21px;top:587.5px;width:74px;height:19.500px"><div class="cb"></div><span style="position:absolute;left:36px;top:.5px">/</span><div class="zb"><i></i><i></i></div></div>
<svg style="left:728.8px;top:33.8px" width="282.9" height="121.3" viewBox="474 22 184 79" preserveAspectRatio="none"><defs><radialGradient id="kg" cx=".38" cy=".32" r=".75"><stop offset="0" stop-color="#ffffff"/><stop offset=".45" stop-color="#c8c4b8"/><stop offset="1" stop-color="#5a5448"/></radialGradient><linearGradient id="disp" x1="0" y1="0" x2="0" y2="1"><stop offset="0" stop-color="#5a3a10"/><stop offset=".05" stop-color="#6a4a18"/><stop offset=".09" stop-color="#c09030"/><stop offset=".14" stop-color="#f4dc80"/><stop offset=".3" stop-color="#f2dca0"/><stop offset="1" stop-color="#ecd49a"/></linearGradient><linearGradient id="metal" x1="0" y1="0" x2="0" y2="1"><stop offset="0" stop-color="#e0dcd0"/><stop offset=".5" stop-color="#c4beb0"/><stop offset="1" stop-color="#a8a294"/></linearGradient><radialGradient id="glow" cx=".5" cy=".5" r=".5"><stop offset="0" stop-color="#fffff0" stop-opacity="1"/><stop offset=".45" stop-color="#fff8a0" stop-opacity=".9"/><stop offset="1" stop-color="#f8e060" stop-opacity="0"/></radialGradient><clipPath id="dc"><rect x="480" y="27.300" width="172" height="42" rx="1.200"/></clipPath></defs><rect x="476" y="24.2" width="179.29999999999995" height="74.8" rx="1.5" fill="url(#metal)" stroke="#7c766a" stroke-width=".7"/><rect x="476.6" y="24.8" width="178.09999999999997" height="1" fill="#f4f0e8"/><rect x="479" y="26.500" width="174" height="43.500" rx="1.500" fill="#5a4218"/><rect x="480" y="27.300" width="172" height="42" rx="1.200" fill="url(#disp)"/><g clip-path="url(#dc)"><ellipse cx="506" cy="29.200" rx="17" ry="5.500" fill="url(#glow)"/><ellipse cx="546" cy="29.200" rx="17" ry="5.500" fill="url(#glow)"/><ellipse cx="587" cy="29.200" rx="17" ry="5.500" fill="url(#glow)"/><ellipse cx="634" cy="29.200" rx="17" ry="5.500" fill="url(#glow)"/></g><rect x="480" y="27.300" width="172" height="1.300" fill="#5a3a10"/><rect x="490.400" y="40" width="50.600" height="9.800" fill="#c8ac6c" stroke="#8a7040" stroke-width=".6"/><rect x="490.400" y="51.500" width="50.600" height="13.500" fill="#d4b878" stroke="#8a7040" stroke-width=".6"/><polygon points="495,43 498.500,45 495,47" fill="#6a5228"/><rect x="491.500" y="42" width="1" height="6" fill="#6a5228"/><text x="507" y="48.600" font-family="Liberation Serif,serif" font-weight="bold" font-size="10" fill="#6a5430" letter-spacing="2.100">04:42</text><text x="490.500" y="37.500" font-family="Liberation Mono,monospace" font-weight="bold" font-size="5" fill="#806840" textLength="11" lengthAdjust="spacingAndGlyphs">N-LOG</text><path d="M492 63.500 L492 61.1 L493 59.5 L494 60.3 L495 58.7 L496 59.5 L497 61.1 L498 60.3 L499 58.7 L500 57.9 L501 59.5 L502 58.7 L503 60.3 L504 59.5 L505 57.9 L506 57.1 L507 58.7 L508 59.5 L509 58.7 L510 57.9 L511 59.5 L512 60.3 L513 59.5 L514 58.7 L515 57.9 L516 58.7 L517 60.3 L518 61.1 L519 59.5 L520 58.7 L521 59.5 L522 60.3 L523 58.7 L524 57.9 L525 59.5 L526 60.3 L527 61.1 L528 60.3 L529 59.5 L530 60.3 L531 61.1 L532 60.3 L533 59.5 L534 58.7 L535 59.5 L536 60.3 L537 61.1 L538 60.3 L539 59.5 L540 63.500 Z" fill="#8a7444" opacity=".85"/><path d="M492 58 C500 52 508 62 516 57 S530 54 540 59" stroke="#9a8450" stroke-width=".5" fill="none"/><path d="M491.500 64h49" stroke="#6a5228" stroke-width=".8" stroke-dasharray="2.500 .8"/><text x="589" y="36.800" text-anchor="middle" font-family="Liberation Serif,serif" font-style="italic" font-size="4.200" fill="#a08850">Software Audio Player</text><text x="548" y="46" font-family="Liberation Mono,monospace" font-weight="bold" font-size="6.600" fill="#806838" textLength="97.500" lengthAdjust="spacingAndGlyphs">7. DARK CORNERS EP - 07 - SWAG</text><path d="M547 48.200h99" stroke="#8a7444" stroke-width=".6"/><path d="M548 47.300h98" stroke="#8a7444" stroke-width=".9" stroke-dasharray=".5 3.400"/><text x="548" y="56.300" font-family="Liberation Mono,monospace" font-weight="bold" font-size="6.200" fill="#806838" textLength="22.500" lengthAdjust="spacingAndGlyphs">192 KB/S</text><text x="577.700" y="56.300" font-family="Liberation Mono,monospace" font-weight="bold" font-size="6.200" fill="#806838" textLength="16.500" lengthAdjust="spacingAndGlyphs">44 KHZ</text><text x="610" y="56.300" font-family="Liberation Mono,monospace" font-weight="bold" font-size="5.600" fill="#806838" textLength="9" lengthAdjust="spacingAndGlyphs">MODE</text><rect x="621" y="51.500" width="27.400" height="6.500" fill="#d8bc78" stroke="#8a7040" stroke-width=".5"/><path d="M625 57 C630 53 638 53 644 55" stroke="#a06030" stroke-width=".5" fill="none"/><path d="M639 57.500l3-5" stroke="#503818" stroke-width=".8"/><rect x="621.500" y="52" width="2" height="2.500" fill="#b09858"/><rect x="645.500" y="52" width="2.300" height="2.500" fill="#b09858"/><text x="621" y="65.800" font-family="Liberation Mono,monospace" font-weight="bold" font-size="4.500" fill="#806838" textLength="4.500" lengthAdjust="spacingAndGlyphs">EQ</text><circle cx="628" cy="64.6" r="2.6" fill="#4a4438"/><circle cx="628" cy="64" r="1.7" fill="url(#kg)"/><circle cx="641.6" cy="64.6" r="2.6" fill="#4a4438"/><circle cx="641.6" cy="64" r="1.7" fill="url(#kg)"/><text x="644.500" y="65.800" font-family="Liberation Mono,monospace" font-weight="bold" font-size="4.500" fill="#806838" textLength="4.500" lengthAdjust="spacingAndGlyphs">PL</text><rect x="476.5" y="70" width="178.29999999999995" height="2.200" fill="#dcd8cc"/><rect x="476.5" y="71.800" width="178.29999999999995" height=".7" fill="#8a8478"/><path d="M560.500 72 L560.500 64 C560.500 59.500 563 57.800 567 57.800 L606 57.800 C610 57.800 613 59.500 613 64 L613 72 Z" fill="url(#metal)" stroke="#8a8478" stroke-width=".6"/><circle cx="568" cy="65.89999999999999" r="5.2" fill="#4a4438"/><circle cx="568" cy="65.3" r="4.3" fill="url(#kg)"/><circle cx="604" cy="65.89999999999999" r="5.2" fill="#4a4438"/><circle cx="604" cy="65.3" r="4.3" fill="url(#kg)"/><path d="M568 65.300l3.500 1.500" stroke="#c03020" stroke-width=".9"/><path d="M604 65.300l-.8-3.800" stroke="#c03020" stroke-width=".9"/><text x="575" y="67.300" font-family="Liberation Mono,monospace" font-weight="bold" font-size="6" fill="#4a4438" textLength="7.500" lengthAdjust="spacingAndGlyphs">VOL</text><text x="591" y="67.300" font-family="Liberation Mono,monospace" font-weight="bold" font-size="6" fill="#4a4438" textLength="7.500" lengthAdjust="spacingAndGlyphs">BAL</text><path d="M586.300 62v7" stroke="#5a5448" stroke-width=".7"/><rect x="479" y="73.300" width="173" height="1.400" rx=".7" fill="#3a362c"/><rect x="479" y="74.700" width="173" height=".6" fill="#f0ece0"/><rect x="618.500" y="72.300" width="7.500" height="3.400" rx=".8" fill="#e8e4d8" stroke="#5a5448" stroke-width=".5"/><rect x="621.300" y="72.600" width="1.600" height="2.800" fill="#c03020"/><rect x="484.500" y="77.800" width="78.500" height="18" rx="1.500" fill="#d4d0c4" stroke="#6a6458" stroke-width=".7"/><rect x="485.500" y="78.800" width="76.500" height="16" rx="1" fill="none" stroke="#f4f0e8" stroke-width=".6"/><path d="M502 80.500v12" stroke="#a8a294" stroke-width=".6"/><path d="M516.5 80.500v12" stroke="#a8a294" stroke-width=".6"/><path d="M531.5 80.500v12" stroke="#a8a294" stroke-width=".6"/><path d="M546 80.500v12" stroke="#a8a294" stroke-width=".6"/><circle cx="486.3" cy="79.5" r=".7" fill="#3a362c"/><circle cx="561.3" cy="79.5" r=".7" fill="#3a362c"/><circle cx="486.3" cy="94" r=".7" fill="#3a362c"/><circle cx="561.3" cy="94" r=".7" fill="#3a362c"/><circle cx="495" cy="89.6" r="3.1999999999999997" fill="#4a4438"/><circle cx="495" cy="89" r="2.3" fill="url(#kg)"/><circle cx="509.3" cy="89.1" r="4.6000000000000005" fill="#4a4438"/><circle cx="509.3" cy="88.5" r="3.7" fill="url(#kg)"/><circle cx="524" cy="89.1" r="4.6000000000000005" fill="#4a4438"/><circle cx="524" cy="88.5" r="3.7" fill="url(#kg)"/><circle cx="538.8" cy="89.1" r="4.6000000000000005" fill="#4a4438"/><circle cx="538.8" cy="88.5" r="3.7" fill="url(#kg)"/><circle cx="553" cy="89.6" r="3.1999999999999997" fill="#4a4438"/><circle cx="553" cy="89" r="2.3" fill="url(#kg)"/><path d="M493.500 81v3.500M497 81l-2.500 1.750 2.500 1.750z" stroke="#3a362c" stroke-width=".7" fill="#3a362c"/><polygon points="507.800,80.800 511.300,82.600 507.800,84.400" fill="#3a362c"/><path d="M522.800 81v3.500M525.200 81v3.500" stroke="#3a362c" stroke-width="1"/><rect x="537.200" y="81" width="3.300" height="3.300" fill="#3a362c"/><path d="M554.500 81v3.500M551 81l2.500 1.750-2.500 1.750z" stroke="#3a362c" stroke-width=".7" fill="#3a362c"/><circle cx="572.200" cy="88" r="5.800" fill="#b8b2a4" stroke="#6a6458" stroke-width=".6"/><circle cx="572.2" cy="88.6" r="3.5" fill="#4a4438"/><circle cx="572.2" cy="88" r="2.6" fill="url(#kg)"/><text x="586" y="84.800" font-family="Liberation Mono,monospace" font-weight="bold" font-size="5.800" fill="#4a4438" textLength="15.4" lengthAdjust="spacingAndGlyphs">SHUFFLE</text><text x="581.0" y="90" font-family="Liberation Mono,monospace" font-weight="bold" font-size="5.600" fill="#4a4438" textLength="6.600" lengthAdjust="spacingAndGlyphs">OFF</text><rect x="588.6" y="85.800" width="9.600" height="4.600" rx=".6" fill="#2a261c"/><rect x="589.2" y="86.400" width="3.600" height="3.400" fill="#d8d4c8"/><text x="599.6" y="90" font-family="Liberation Mono,monospace" font-weight="bold" font-size="5.600" fill="#4a4438" textLength="4.600" lengthAdjust="spacingAndGlyphs">ON</text><text x="613.3" y="84.800" font-family="Liberation Mono,monospace" font-weight="bold" font-size="5.800" fill="#4a4438" textLength="13.2" lengthAdjust="spacingAndGlyphs">REPEAT</text><text x="607.1999999999999" y="90" font-family="Liberation Mono,monospace" font-weight="bold" font-size="5.600" fill="#4a4438" textLength="6.600" lengthAdjust="spacingAndGlyphs">OFF</text><rect x="614.8" y="85.800" width="9.600" height="4.600" rx=".6" fill="#2a261c"/><rect x="615.4" y="86.400" width="3.600" height="3.400" fill="#d8d4c8"/><text x="625.8" y="90" font-family="Liberation Mono,monospace" font-weight="bold" font-size="5.600" fill="#4a4438" textLength="4.600" lengthAdjust="spacingAndGlyphs">ON</text><rect x="634.800" y="79.500" width="16.200" height="16.200" rx="2" fill="#d0ccc0" stroke="#6a6458" stroke-width=".6"/><circle cx="642.900" cy="87.600" r="6.800" fill="#3a362c"/><circle cx="642.900" cy="87.600" r="5.600" fill="#c8c4b8"/><rect x="639" y="83.700" width="7.800" height="7.800" rx="1" fill="#3a362c"/><rect x="640.300" y="85" width="5.200" height="5.200" rx=".6" fill="#c8c4b8"/><rect x="641.600" y="86.300" width="2.600" height="2.600" fill="#3a362c"/><circle cx="636" cy="80.7" r=".7" fill="#3a362c"/><circle cx="649.8" cy="80.7" r=".7" fill="#3a362c"/><circle cx="636" cy="94.5" r=".7" fill="#3a362c"/><circle cx="649.8" cy="94.5" r=".7" fill="#3a362c"/></svg>
</div></body></html>
